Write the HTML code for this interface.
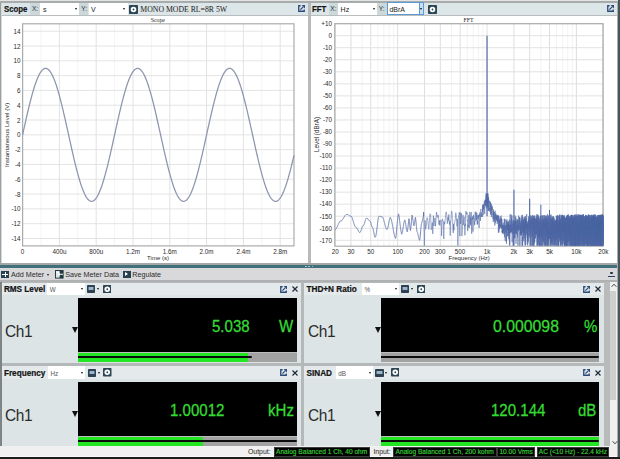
<!DOCTYPE html>
<html><head><meta charset="utf-8"><title>APx</title><style>
*{box-sizing:border-box;margin:0;padding:0}
html,body{width:620px;height:459px;overflow:hidden;background:#f0f0f0;font-family:"Liberation Sans",sans-serif;position:relative;color:#111}
.a{position:absolute}
.t{position:absolute;white-space:nowrap;line-height:1}
.hb{background:#dce5e7}
.lbl{background:#cdd8db}
.dd{background:#fff}
.arr{position:absolute;width:0;height:0;border-left:1.5px solid transparent;border-right:1.5px solid transparent;border-top:2px solid #111}
.gear{position:absolute;background:#2c4654;border-radius:1px}
.gear i{position:absolute;left:1.5px;top:1.5px;width:5.8px;height:5.8px;border:1.7px solid #fff;border-radius:50%;background:#2c4654}
.ic{position:absolute}
.mic{position:absolute;width:8.4px;height:8.3px;background:#2c4252;border-radius:0.8px}
.mic i{position:absolute;left:1px;top:2.2px;width:6.4px;height:3.6px;background:#9fb4c6;border-left:1.2px solid #5a7488;border-right:1.2px solid #5a7488}
.tri{position:absolute;width:0;height:0;border-left:1.5px solid transparent;border-right:1.5px solid transparent;border-top:2px solid #222}
svg text{font-family:"Liberation Sans",sans-serif}
.green{color:#2cd42c}
</style></head>
<body>
<div class="a" style="left:0px;top:0px;width:620px;height:1px;background:#e3e4e4;"></div>
<div class="a" style="left:0px;top:1px;width:620px;height:2px;background:#a7abab;"></div>
<div class="a" style="left:0px;top:3px;width:1px;height:260px;background:#9aa0a0;"></div>
<div class="a" style="left:1px;top:3px;width:1px;height:260px;background:#d6dada;"></div>
<div class="a" style="left:2px;top:3px;width:305.7px;height:12px;background:#dce5e7;"></div>
<div class="a" style="left:2px;top:15px;width:305.7px;height:1px;background:#b9bdbd;"></div>
<div class="a" style="left:2px;top:16px;width:305.7px;height:247px;background:#ffffff;"></div>
<div class="t" style="left:4px;top:5.1px;font-size:8.7px;font-weight:bold;color:#141414;-webkit-text-stroke:0.2px #141414;transform:scaleX(0.9);transform-origin:0 0">Scope</div>
<div class="a" style="left:30px;top:3px;width:10.3px;height:12px;background:#cdd8db;"></div>
<div class="t" style="left:32px;top:6px;font-size:6.5px;color:#26323e">X:</div>
<div class="a" style="left:40.3px;top:3px;width:38.5px;height:12px;background:#ffffff;"></div>
<div class="t" style="left:43px;top:6px;font-size:7px;color:#222">s</div>
<div class="arr" style="left:75px;top:8.2px"></div>
<div class="a" style="left:78.8px;top:3px;width:9.7px;height:12px;background:#cdd8db;"></div>
<div class="t" style="left:81.3px;top:6px;font-size:6.5px;color:#26323e">Y:</div>
<div class="a" style="left:88.5px;top:3px;width:39.1px;height:12px;background:#ffffff;"></div>
<div class="t" style="left:91px;top:6px;font-size:7px;color:#222">V</div>
<div class="arr" style="left:123.3px;top:8.2px"></div>
<svg class="ic" style="left:129.4px;top:4.6px" width="9" height="9" viewBox="0 0 9 9"><rect width="9" height="9" rx="0.8" fill="#2c4654"/><circle cx="4.5" cy="4.5" r="1.85" fill="none" stroke="#fff" stroke-width="1.9"/></svg>
<div class="t" style="left:140.3px;top:5.9px;font-size:7.75px;font-family:'Liberation Serif',serif;color:#1a1a1a">MONO MODE RL=8R 5W</div>
<svg class="ic" style="left:297.5px;top:5.2px" width="7" height="7" viewBox="0 0 7 7"><path d="M2.6 0.75 H0.75 V6.25 H6.25 V4.4" fill="none" stroke="#2a4878" stroke-width="1.3"/><path d="M2.4 4.6 L5.2 1.8" stroke="#2a4878" stroke-width="1.2"/><path d="M3.6 0 H7 V3.4 Z" fill="#2a4878"/></svg>
<div class="a" style="left:307.7px;top:3px;width:2.9px;height:260px;background:#b9bbbb;"></div>
<div class="a" style="left:310.6px;top:3px;width:306.9px;height:12px;background:#dce5e7;"></div>
<div class="a" style="left:310.6px;top:15px;width:306.9px;height:1px;background:#b9bdbd;"></div>
<div class="a" style="left:310.6px;top:16px;width:306.9px;height:247px;background:#ffffff;"></div>
<div class="a" style="left:617.2px;top:3px;width:1px;height:260px;background:#a8acac;"></div>
<div class="a" style="left:618.2px;top:0px;width:1.8px;height:263px;background:#46565c;"></div>
<div class="t" style="left:312.4px;top:5.1px;font-size:8.7px;font-weight:bold;color:#141414;-webkit-text-stroke:0.2px #141414;transform:scaleX(0.9);transform-origin:0 0">FFT</div>
<div class="a" style="left:329px;top:3px;width:9px;height:12px;background:#cdd8db;"></div>
<div class="t" style="left:330.3px;top:6px;font-size:6.5px;color:#26323e">X:</div>
<div class="a" style="left:338px;top:3px;width:39px;height:12px;background:#ffffff;"></div>
<div class="t" style="left:340.6px;top:6px;font-size:7px;color:#222">Hz</div>
<div class="arr" style="left:372.5px;top:8.2px"></div>
<div class="a" style="left:377px;top:3px;width:9.8px;height:12px;background:#cdd8db;"></div>
<div class="t" style="left:378.8px;top:6px;font-size:6.5px;color:#26323e">Y:</div>
<div class="a" style="left:386.8px;top:2.2px;width:37.4px;height:13.2px;background:#ffffff;border:1px solid #5a9ad6"></div>
<div class="a" style="left:419.4px;top:2.2px;width:4.8px;height:13.2px;background:#c9dff2;border:1px solid #5a9ad6"></div>
<div class="t" style="left:389.4px;top:6px;font-size:7px;color:#222">dBrA</div>
<div class="arr" style="left:420.3px;top:8.2px"></div>
<svg class="ic" style="left:427.6px;top:4.6px" width="9" height="9" viewBox="0 0 9 9"><rect width="9" height="9" rx="0.8" fill="#2c4654"/><circle cx="4.5" cy="4.5" r="1.85" fill="none" stroke="#fff" stroke-width="1.9"/></svg>
<svg class="ic" style="left:606.8px;top:5.4px" width="7" height="7" viewBox="0 0 7 7"><path d="M2.6 0.75 H0.75 V6.25 H6.25 V4.4" fill="none" stroke="#2a4878" stroke-width="1.3"/><path d="M2.4 4.6 L5.2 1.8" stroke="#2a4878" stroke-width="1.2"/><path d="M3.6 0 H7 V3.4 Z" fill="#2a4878"/></svg>
<svg class="a" style="left:0;top:0" width="620" height="263" viewBox="0 0 620 263"><g><line x1="22.6" y1="23.8" x2="22.6" y2="245.9" stroke="#e2e2e2" stroke-width="1"/>
<line x1="41" y1="23.8" x2="41" y2="245.9" stroke="#f4f4f4" stroke-width="1"/>
<line x1="59.4" y1="23.8" x2="59.4" y2="245.9" stroke="#e2e2e2" stroke-width="1"/>
<line x1="77.8" y1="23.8" x2="77.8" y2="245.9" stroke="#f4f4f4" stroke-width="1"/>
<line x1="96.2" y1="23.8" x2="96.2" y2="245.9" stroke="#e2e2e2" stroke-width="1"/>
<line x1="114.6" y1="23.8" x2="114.6" y2="245.9" stroke="#f4f4f4" stroke-width="1"/>
<line x1="133" y1="23.8" x2="133" y2="245.9" stroke="#e2e2e2" stroke-width="1"/>
<line x1="151.4" y1="23.8" x2="151.4" y2="245.9" stroke="#f4f4f4" stroke-width="1"/>
<line x1="169.8" y1="23.8" x2="169.8" y2="245.9" stroke="#e2e2e2" stroke-width="1"/>
<line x1="188.2" y1="23.8" x2="188.2" y2="245.9" stroke="#f4f4f4" stroke-width="1"/>
<line x1="206.6" y1="23.8" x2="206.6" y2="245.9" stroke="#e2e2e2" stroke-width="1"/>
<line x1="225" y1="23.8" x2="225" y2="245.9" stroke="#f4f4f4" stroke-width="1"/>
<line x1="243.4" y1="23.8" x2="243.4" y2="245.9" stroke="#e2e2e2" stroke-width="1"/>
<line x1="261.8" y1="23.8" x2="261.8" y2="245.9" stroke="#f4f4f4" stroke-width="1"/>
<line x1="280.2" y1="23.8" x2="280.2" y2="245.9" stroke="#e2e2e2" stroke-width="1"/>
<line x1="22.6" y1="238.49" x2="294.0" y2="238.49" stroke="#e4e4e4" stroke-width="1"/>
<line x1="22.6" y1="223.69" x2="294.0" y2="223.69" stroke="#e4e4e4" stroke-width="1"/>
<line x1="22.6" y1="208.88" x2="294.0" y2="208.88" stroke="#e4e4e4" stroke-width="1"/>
<line x1="22.6" y1="194.07" x2="294.0" y2="194.07" stroke="#e4e4e4" stroke-width="1"/>
<line x1="22.6" y1="179.27" x2="294.0" y2="179.27" stroke="#e4e4e4" stroke-width="1"/>
<line x1="22.6" y1="164.46" x2="294.0" y2="164.46" stroke="#e4e4e4" stroke-width="1"/>
<line x1="22.6" y1="149.66" x2="294.0" y2="149.66" stroke="#e4e4e4" stroke-width="1"/>
<line x1="22.6" y1="134.85" x2="294.0" y2="134.85" stroke="#e4e4e4" stroke-width="1"/>
<line x1="22.6" y1="120.04" x2="294.0" y2="120.04" stroke="#e4e4e4" stroke-width="1"/>
<line x1="22.6" y1="105.24" x2="294.0" y2="105.24" stroke="#e4e4e4" stroke-width="1"/>
<line x1="22.6" y1="90.43" x2="294.0" y2="90.43" stroke="#e4e4e4" stroke-width="1"/>
<line x1="22.6" y1="75.63" x2="294.0" y2="75.63" stroke="#e4e4e4" stroke-width="1"/>
<line x1="22.6" y1="60.82" x2="294.0" y2="60.82" stroke="#e4e4e4" stroke-width="1"/>
<line x1="22.6" y1="46.01" x2="294.0" y2="46.01" stroke="#e4e4e4" stroke-width="1"/>
<line x1="22.6" y1="31.21" x2="294.0" y2="31.21" stroke="#e4e4e4" stroke-width="1"/>
<rect x="22.6" y="23.8" width="271.4" height="222.1" fill="none" stroke="#acacac" stroke-width="1.2"/>
<polyline points="22.6,134.85 23.05,132.8 23.5,130.74 23.96,128.7 24.41,126.66 24.86,124.62 25.31,122.6 25.77,120.58 26.22,118.59 26.67,116.6 27.12,114.64 27.58,112.69 28.03,110.76 28.48,108.86 28.93,106.98 29.38,105.13 29.84,103.31 30.29,101.52 30.74,99.76 31.19,98.03 31.65,96.34 32.1,94.68 32.55,93.06 33,91.49 33.46,89.95 33.91,88.46 34.36,87.01 34.81,85.61 35.27,84.25 35.72,82.94 36.17,81.68 36.62,80.48 37.07,79.32 37.53,78.22 37.98,77.17 38.43,76.18 38.88,75.24 39.34,74.36 39.79,73.53 40.24,72.77 40.69,72.07 41.15,71.42 41.6,70.84 42.05,70.31 42.5,69.85 42.95,69.45 43.41,69.11 43.86,68.84 44.31,68.63 44.76,68.48 45.22,68.39 45.67,68.37 46.12,68.41 46.57,68.52 47.03,68.69 47.48,68.92 47.93,69.21 48.38,69.57 48.84,69.99 49.29,70.47 49.74,71.01 50.19,71.62 50.64,72.28 51.1,73.01 51.55,73.79 52,74.63 52.45,75.53 52.91,76.48 53.36,77.5 53.81,78.56 54.26,79.68 54.72,80.85 55.17,82.08 55.62,83.35 56.07,84.67 56.53,86.05 56.98,87.46 57.43,88.93 57.88,90.43 58.33,91.98 58.79,93.57 59.24,95.2 59.69,96.87 60.14,98.57 60.6,100.31 61.05,102.08 61.5,103.88 61.95,105.72 62.41,107.58 62.86,109.46 63.31,111.37 63.76,113.3 64.21,115.26 64.67,117.23 65.12,119.22 65.57,121.22 66.02,123.24 66.48,125.27 66.93,127.3 67.38,129.35 67.83,131.4 68.29,133.45 68.74,135.5 69.19,137.55 69.64,139.61 70.09,141.65 70.55,143.69 71,145.72 71.45,147.74 71.9,149.75 72.36,151.75 72.81,153.72 73.26,155.68 73.71,157.62 74.17,159.54 74.62,161.44 75.07,163.31 75.52,165.15 75.98,166.96 76.43,168.75 76.88,170.5 77.33,172.21 77.78,173.89 78.24,175.54 78.69,177.14 79.14,178.71 79.59,180.23 80.05,181.71 80.5,183.14 80.95,184.53 81.4,185.87 81.86,187.16 82.31,188.41 82.76,189.6 83.21,190.74 83.66,191.82 84.12,192.85 84.57,193.83 85.02,194.75 85.47,195.61 85.93,196.41 86.38,197.16 86.83,197.85 87.28,198.47 87.74,199.04 88.19,199.54 88.64,199.98 89.09,200.36 89.55,200.68 90,200.94 90.45,201.13 90.9,201.26 91.35,201.32 91.81,201.32 92.26,201.26 92.71,201.13 93.16,200.95 93.62,200.69 94.07,200.38 94.52,200 94.97,199.56 95.43,199.06 95.88,198.5 96.33,197.88 96.78,197.19 97.23,196.45 97.69,195.65 98.14,194.79 98.59,193.87 99.04,192.9 99.5,191.87 99.95,190.79 100.4,189.65 100.85,188.46 101.31,187.22 101.76,185.93 102.21,184.6 102.66,183.21 103.12,181.78 103.57,180.3 104.02,178.78 104.47,177.22 104.92,175.61 105.38,173.97 105.83,172.29 106.28,170.58 106.73,168.83 107.19,167.05 107.64,165.24 108.09,163.4 108.54,161.53 109,159.63 109.45,157.72 109.9,155.78 110.35,153.82 110.8,151.84 111.26,149.85 111.71,147.84 112.16,145.82 112.61,143.79 113.07,141.75 113.52,139.7 113.97,137.65 114.42,135.6 114.88,133.55 115.33,131.49 115.78,129.44 116.23,127.4 116.69,125.36 117.14,123.34 117.59,121.32 118.04,119.31 118.49,117.32 118.95,115.35 119.4,113.4 119.85,111.46 120.3,109.55 120.76,107.67 121.21,105.81 121.66,103.97 122.11,102.17 122.57,100.4 123.02,98.66 123.47,96.95 123.92,95.28 124.37,93.65 124.83,92.06 125.28,90.51 125.73,89 126.18,87.53 126.64,86.11 127.09,84.74 127.54,83.41 127.99,82.14 128.45,80.91 128.9,79.74 129.35,78.61 129.8,77.55 130.26,76.53 130.71,75.57 131.16,74.67 131.61,73.83 132.06,73.04 132.52,72.32 132.97,71.65 133.42,71.04 133.87,70.5 134.33,70.01 134.78,69.59 135.23,69.23 135.68,68.93 136.14,68.7 136.59,68.53 137.04,68.42 137.49,68.37 137.94,68.39 138.4,68.47 138.85,68.62 139.3,68.83 139.75,69.1 140.21,69.43 140.66,69.83 141.11,70.29 141.56,70.81 142.02,71.39 142.47,72.03 142.92,72.74 143.37,73.5 143.83,74.32 144.28,75.19 144.73,76.13 145.18,77.12 145.63,78.17 146.09,79.27 146.54,80.42 146.99,81.62 147.44,82.88 147.9,84.19 148.35,85.54 148.8,86.94 149.25,88.39 149.71,89.88 150.16,91.41 150.61,92.99 151.06,94.6 151.52,96.26 151.97,97.95 152.42,99.67 152.87,101.43 153.32,103.22 153.78,105.04 154.23,106.89 154.68,108.77 155.13,110.67 155.59,112.6 156.04,114.54 156.49,116.51 156.94,118.49 157.4,120.49 157.85,122.5 158.3,124.52 158.75,126.56 159.2,128.6 159.66,130.65 160.11,132.7 160.56,134.75 161.01,136.8 161.47,138.86 161.92,140.9 162.37,142.95 162.82,144.98 163.28,147.01 163.73,149.02 164.18,151.02 164.63,153 165.09,154.97 165.54,156.92 165.99,158.84 166.44,160.75 166.89,162.63 167.35,164.48 167.8,166.3 168.25,168.1 168.7,169.86 169.16,171.59 169.61,173.28 170.06,174.94 170.51,176.56 170.97,178.14 171.42,179.68 171.87,181.17 172.32,182.62 172.77,184.03 173.23,185.39 173.68,186.7 174.13,187.96 174.58,189.17 175.04,190.33 175.49,191.43 175.94,192.48 176.39,193.48 176.85,194.42 177.3,195.3 177.75,196.13 178.2,196.89 178.65,197.6 179.11,198.25 179.56,198.84 180.01,199.36 180.46,199.83 180.92,200.23 181.37,200.57 181.82,200.85 182.27,201.06 182.73,201.22 183.18,201.3 183.63,201.33 184.08,201.29 184.54,201.19 184.99,201.02 185.44,200.79 185.89,200.5 186.34,200.15 186.8,199.73 187.25,199.25 187.7,198.71 188.15,198.11 188.61,197.45 189.06,196.73 189.51,195.95 189.96,195.11 190.42,194.21 190.87,193.26 191.32,192.25 191.77,191.19 192.22,190.07 192.68,188.9 193.13,187.68 193.58,186.41 194.03,185.09 194.49,183.72 194.94,182.31 195.39,180.85 195.84,179.34 196.3,177.79 196.75,176.21 197.2,174.58 197.65,172.91 198.11,171.21 198.56,169.47 199.01,167.7 199.46,165.9 199.91,164.07 200.37,162.21 200.82,160.33 201.27,158.42 201.72,156.49 202.18,154.54 202.63,152.57 203.08,150.58 203.53,148.58 203.99,146.56 204.44,144.53 204.89,142.5 205.34,140.45 205.79,138.4 206.25,136.35 206.7,134.3 207.15,132.24 207.6,130.19 208.06,128.15 208.51,126.11 208.96,124.08 209.41,122.05 209.87,120.04 210.32,118.05 210.77,116.07 211.22,114.11 211.68,112.17 212.13,110.25 212.58,108.35 213.03,106.48 213.48,104.64 213.94,102.82 214.39,101.04 214.84,99.29 215.29,97.57 215.75,95.89 216.2,94.24 216.65,92.63 217.1,91.07 217.56,89.54 218.01,88.06 218.46,86.63 218.91,85.24 219.36,83.89 219.82,82.6 220.27,81.35 220.72,80.16 221.17,79.02 221.63,77.93 222.08,76.9 222.53,75.92 222.98,75 223.44,74.13 223.89,73.32 224.34,72.58 224.79,71.89 225.25,71.26 225.7,70.69 226.15,70.18 226.6,69.74 227.05,69.35 227.51,69.03 227.96,68.78 228.41,68.58 228.86,68.45 229.32,68.38 229.77,68.38 230.22,68.44 230.67,68.56 231.13,68.74 231.58,68.99 232.03,69.3 232.48,69.68 232.93,70.11 233.39,70.61 233.84,71.17 234.29,71.79 234.74,72.47 235.2,73.21 235.65,74.01 236.1,74.87 236.55,75.78 237.01,76.75 237.46,77.78 237.91,78.86 238.36,79.99 238.82,81.18 239.27,82.42 239.72,83.7 240.17,85.04 240.62,86.42 241.08,87.85 241.53,89.33 241.98,90.85 242.43,92.41 242.89,94.01 243.34,95.65 243.79,97.32 244.24,99.04 244.7,100.78 245.15,102.56 245.6,104.37 246.05,106.21 246.5,108.08 246.96,109.97 247.41,111.89 247.86,113.83 248.31,115.79 248.77,117.76 249.22,119.76 249.67,121.76 250.12,123.78 250.58,125.81 251.03,127.85 251.48,129.9 251.93,131.95 252.39,134 252.84,136.05 253.29,138.11 253.74,140.16 254.19,142.2 254.65,144.24 255.1,146.27 255.55,148.28 256,150.29 256.46,152.28 256.91,154.25 257.36,156.21 257.81,158.14 258.27,160.06 258.72,161.94 259.17,163.81 259.62,165.64 260.07,167.45 260.53,169.22 260.98,170.96 261.43,172.67 261.88,174.34 262.34,175.97 262.79,177.57 263.24,179.12 263.69,180.63 264.15,182.1 264.6,183.52 265.05,184.9 265.5,186.22 265.96,187.5 266.41,188.73 266.86,189.91 267.31,191.03 267.76,192.1 268.22,193.12 268.67,194.08 269.12,194.99 269.57,195.83 270.03,196.62 270.48,197.35 270.93,198.02 271.38,198.63 271.84,199.18 272.29,199.67 272.74,200.09 273.19,200.45 273.64,200.76 274.1,200.99 274.55,201.17 275,201.28 275.45,201.33 275.91,201.31 276.36,201.23 276.81,201.09 277.26,200.88 277.72,200.62 278.17,200.28 278.62,199.89 279.07,199.43 279.53,198.92 279.98,198.34 280.43,197.7 280.88,197 281.33,196.24 281.79,195.42 282.24,194.55 282.69,193.62 283.14,192.63 283.6,191.59 284.05,190.49 284.5,189.34 284.95,188.14 285.41,186.88 285.86,185.58 286.31,184.23 286.76,182.83 287.22,181.38 287.67,179.9 288.12,178.36 288.57,176.79 289.02,175.18 289.48,173.53 289.93,171.84 290.38,170.11 290.83,168.35 291.29,166.56 291.74,164.74 292.19,162.9 292.64,161.02 293.1,159.12 293.55,157.2 294,155.25" fill="none" stroke="#8c94ae" stroke-width="1.25"/></g><g><line x1="335.2" y1="23.7" x2="335.2" y2="246.2" stroke="#dedede" stroke-width="1"/>
<line x1="350.94" y1="23.7" x2="350.94" y2="246.2" stroke="#dedede" stroke-width="1"/>
<line x1="362.1" y1="23.7" x2="362.1" y2="246.2" stroke="#f3f3f3" stroke-width="1"/>
<line x1="370.76" y1="23.7" x2="370.76" y2="246.2" stroke="#dedede" stroke-width="1"/>
<line x1="377.84" y1="23.7" x2="377.84" y2="246.2" stroke="#f3f3f3" stroke-width="1"/>
<line x1="383.82" y1="23.7" x2="383.82" y2="246.2" stroke="#f3f3f3" stroke-width="1"/>
<line x1="389" y1="23.7" x2="389" y2="246.2" stroke="#f3f3f3" stroke-width="1"/>
<line x1="393.58" y1="23.7" x2="393.58" y2="246.2" stroke="#f3f3f3" stroke-width="1"/>
<line x1="397.66" y1="23.7" x2="397.66" y2="246.2" stroke="#dedede" stroke-width="1"/>
<line x1="424.57" y1="23.7" x2="424.57" y2="246.2" stroke="#dedede" stroke-width="1"/>
<line x1="440.3" y1="23.7" x2="440.3" y2="246.2" stroke="#dedede" stroke-width="1"/>
<line x1="451.47" y1="23.7" x2="451.47" y2="246.2" stroke="#f3f3f3" stroke-width="1"/>
<line x1="460.13" y1="23.7" x2="460.13" y2="246.2" stroke="#dedede" stroke-width="1"/>
<line x1="467.21" y1="23.7" x2="467.21" y2="246.2" stroke="#f3f3f3" stroke-width="1"/>
<line x1="473.19" y1="23.7" x2="473.19" y2="246.2" stroke="#f3f3f3" stroke-width="1"/>
<line x1="478.37" y1="23.7" x2="478.37" y2="246.2" stroke="#f3f3f3" stroke-width="1"/>
<line x1="482.94" y1="23.7" x2="482.94" y2="246.2" stroke="#f3f3f3" stroke-width="1"/>
<line x1="487.03" y1="23.7" x2="487.03" y2="246.2" stroke="#dedede" stroke-width="1"/>
<line x1="513.93" y1="23.7" x2="513.93" y2="246.2" stroke="#dedede" stroke-width="1"/>
<line x1="529.67" y1="23.7" x2="529.67" y2="246.2" stroke="#dedede" stroke-width="1"/>
<line x1="540.84" y1="23.7" x2="540.84" y2="246.2" stroke="#f3f3f3" stroke-width="1"/>
<line x1="549.5" y1="23.7" x2="549.5" y2="246.2" stroke="#dedede" stroke-width="1"/>
<line x1="556.57" y1="23.7" x2="556.57" y2="246.2" stroke="#f3f3f3" stroke-width="1"/>
<line x1="562.55" y1="23.7" x2="562.55" y2="246.2" stroke="#f3f3f3" stroke-width="1"/>
<line x1="567.74" y1="23.7" x2="567.74" y2="246.2" stroke="#f3f3f3" stroke-width="1"/>
<line x1="572.31" y1="23.7" x2="572.31" y2="246.2" stroke="#f3f3f3" stroke-width="1"/>
<line x1="576.4" y1="23.7" x2="576.4" y2="246.2" stroke="#dedede" stroke-width="1"/>
<line x1="603.3" y1="23.7" x2="603.3" y2="246.2" stroke="#dedede" stroke-width="1"/>
<line x1="603.3" y1="23.7" x2="603.3" y2="246.2" stroke="#dedede" stroke-width="1"/>
<line x1="334.8" y1="23.67" x2="603.0" y2="23.67" stroke="#e2e2e2" stroke-width="1"/>
<line x1="334.8" y1="35.7" x2="603.0" y2="35.7" stroke="#e2e2e2" stroke-width="1"/>
<line x1="334.8" y1="47.73" x2="603.0" y2="47.73" stroke="#e2e2e2" stroke-width="1"/>
<line x1="334.8" y1="59.77" x2="603.0" y2="59.77" stroke="#e2e2e2" stroke-width="1"/>
<line x1="334.8" y1="71.81" x2="603.0" y2="71.81" stroke="#e2e2e2" stroke-width="1"/>
<line x1="334.8" y1="83.84" x2="603.0" y2="83.84" stroke="#e2e2e2" stroke-width="1"/>
<line x1="334.8" y1="95.88" x2="603.0" y2="95.88" stroke="#e2e2e2" stroke-width="1"/>
<line x1="334.8" y1="107.91" x2="603.0" y2="107.91" stroke="#e2e2e2" stroke-width="1"/>
<line x1="334.8" y1="119.95" x2="603.0" y2="119.95" stroke="#e2e2e2" stroke-width="1"/>
<line x1="334.8" y1="131.98" x2="603.0" y2="131.98" stroke="#e2e2e2" stroke-width="1"/>
<line x1="334.8" y1="144.01" x2="603.0" y2="144.01" stroke="#e2e2e2" stroke-width="1"/>
<line x1="334.8" y1="156.05" x2="603.0" y2="156.05" stroke="#e2e2e2" stroke-width="1"/>
<line x1="334.8" y1="168.08" x2="603.0" y2="168.08" stroke="#e2e2e2" stroke-width="1"/>
<line x1="334.8" y1="180.12" x2="603.0" y2="180.12" stroke="#e2e2e2" stroke-width="1"/>
<line x1="334.8" y1="192.16" x2="603.0" y2="192.16" stroke="#e2e2e2" stroke-width="1"/>
<line x1="334.8" y1="204.19" x2="603.0" y2="204.19" stroke="#e2e2e2" stroke-width="1"/>
<line x1="334.8" y1="216.23" x2="603.0" y2="216.23" stroke="#e2e2e2" stroke-width="1"/>
<line x1="334.8" y1="228.26" x2="603.0" y2="228.26" stroke="#e2e2e2" stroke-width="1"/>
<line x1="334.8" y1="240.3" x2="603.0" y2="240.3" stroke="#e2e2e2" stroke-width="1"/>
<rect x="334.8" y="23.7" width="268.2" height="222.5" fill="none" stroke="#acacac" stroke-width="1.2"/>
<polyline points="335.2,229.5 335.3,229.5 335.4,229.4 335.5,229.4 335.6,229.4 335.7,229.3 335.8,229.2 335.9,229.1 336.0,229.0 336.1,228.9 336.2,228.8 336.3,228.7 336.4,228.5 336.5,228.4 336.6,228.2 336.7,228.1 336.8,227.9 336.8,227.7 336.9,227.5 337.0,227.3 337.1,227.1 337.2,226.9 337.3,226.6 337.4,226.4 337.5,226.2 337.6,226.0 337.7,225.7 337.8,225.5 337.9,225.2 338.0,225.0 338.1,224.8 338.2,224.5 338.3,224.3 338.4,224.1 338.5,223.9 338.6,223.6 338.7,223.4 338.8,223.2 338.9,223.0 339.0,222.8 339.1,222.6 339.2,222.4 339.3,222.3 339.4,222.1 339.5,222.0 339.6,221.8 339.7,221.7 339.8,221.6 339.9,221.5 339.9,221.4 340.0,221.3 340.1,221.2 340.2,221.1 340.3,221.1 340.4,221.1 340.5,221.0 340.6,221.0 340.7,221.0 340.8,221.0 340.9,221.0 341.0,221.0 341.1,220.9 341.2,220.9 341.3,220.8 341.4,220.8 341.5,220.7 341.6,220.6 341.7,220.6 341.8,220.5 341.9,220.4 342.0,220.3 342.1,220.2 342.2,220.1 342.3,220.0 342.4,219.8 342.5,219.7 342.6,219.6 342.7,219.4 342.8,219.3 342.9,219.2 343.0,219.0 343.0,218.9 343.1,218.7 343.2,218.5 343.3,218.4 343.4,218.2 343.5,218.1 343.6,217.9 343.7,217.7 343.8,217.6 343.9,217.4 344.0,217.3 344.1,217.1 344.2,216.9 344.3,216.8 344.4,216.6 344.5,216.5 344.6,216.3 344.7,216.2 344.8,216.0 344.9,215.9 345.0,215.8 345.1,215.6 345.2,215.5 345.3,215.4 345.4,215.3 345.5,215.2 345.6,215.1 345.7,215.0 345.8,214.9 345.9,214.8 346.0,214.7 346.1,214.7 346.2,214.6 346.2,214.6 346.3,214.5 346.4,214.5 346.5,214.5 346.6,214.4 346.7,214.4 346.8,214.4 346.9,214.4 347.0,214.4 347.1,214.4 347.2,214.5 347.3,214.5 347.4,214.5 347.5,214.5 347.6,214.6 347.7,214.6 347.8,214.6 347.9,214.7 348.0,214.7 348.1,214.8 348.2,214.9 348.3,214.9 348.4,215.0 348.5,215.0 348.6,215.1 348.7,215.2 348.8,215.2 348.9,215.3 349.0,215.4 349.1,215.4 349.2,215.5 349.3,215.6 349.3,215.6 349.4,215.7 349.5,215.8 349.6,215.8 349.7,215.9 349.8,215.9 349.9,216.0 350.0,216.0 350.1,216.1 350.2,216.1 350.3,216.1 350.4,216.2 350.5,216.2 350.6,216.2 350.7,216.2 350.8,216.2 350.9,216.2 351.0,216.2 351.1,216.3 351.2,216.3 351.3,216.4 351.4,216.4 351.5,216.6 351.6,216.7 351.7,216.8 351.8,217.0 351.9,217.2 352.0,217.4 352.1,217.6 352.2,217.8 352.3,218.1 352.4,218.3 352.4,218.6 352.5,218.9 352.6,219.2 352.7,219.5 352.8,219.8 352.9,220.1 353.0,220.5 353.1,220.8 353.2,221.1 353.3,221.5 353.4,221.8 353.5,222.2 353.6,222.5 353.7,222.8 353.8,223.2 353.9,223.5 354.0,223.8 354.1,224.1 354.2,224.4 354.3,224.7 354.4,225.0 354.5,225.2 354.6,225.5 354.7,225.7 354.8,225.9 354.9,226.1 355.0,226.3 355.1,226.5 355.2,226.6 355.3,226.7 355.4,226.8 355.5,226.9 355.6,227.0 355.6,227.0 355.7,227.1 355.8,227.1 355.9,227.1 356.0,227.1 356.1,227.2 356.2,227.2 356.3,227.3 356.4,227.4 356.5,227.5 356.6,227.6 356.7,227.7 356.8,227.9 356.9,228.0 357.0,228.2 357.1,228.4 357.2,228.5 357.3,228.7 357.4,228.9 357.5,229.1 357.6,229.3 357.7,229.5 357.8,229.7 357.9,229.9 358.0,230.1 358.1,230.3 358.2,230.5 358.3,230.7 358.4,230.9 358.5,231.1 358.6,231.3 358.7,231.4 358.7,231.6 358.8,231.7 358.9,231.9 359.0,232.0 359.1,232.1 359.2,232.2 359.3,232.3 359.4,232.4 359.5,232.4 359.6,232.4 359.7,232.5 359.8,232.5 359.9,232.5 360.0,232.4 360.1,232.3 360.2,232.2 360.3,232.1 360.4,231.9 360.5,231.8 360.6,231.6 360.7,231.3 360.8,231.1 360.9,230.8 361.0,230.6 361.1,230.3 361.2,230.0 361.3,229.7 361.4,229.4 361.5,229.1 361.6,228.8 361.7,228.5 361.8,228.2 361.8,227.9 361.9,227.6 362.0,227.3 362.1,227.1 362.2,226.8 362.3,226.6 362.4,226.4 362.5,226.3 362.6,226.1 362.7,226.0 362.8,225.9 362.9,225.9 363.0,225.9 363.1,225.8 363.2,225.8 363.3,225.8 363.4,225.7 363.5,225.6 363.6,225.4 363.7,225.3 363.8,225.1 363.9,224.9 364.0,224.7 364.1,224.4 364.2,224.2 364.3,223.9 364.4,223.6 364.5,223.3 364.6,223.0 364.7,222.6 364.8,222.3 364.9,222.0 365.0,221.7 365.0,221.3 365.1,221.0 365.2,220.7 365.3,220.4 365.4,220.1 365.5,219.8 365.6,219.5 365.7,219.3 365.8,219.1 365.9,218.8 366.0,218.7 366.1,218.5 366.2,218.3 366.3,218.2 366.4,218.1 366.5,218.1 366.6,218.0 366.7,218.0 366.8,218.0 366.9,218.1 367.0,218.1 367.1,218.1 367.2,218.2 367.3,218.3 367.4,218.4 367.5,218.4 367.6,218.5 367.7,218.6 367.8,218.8 367.9,218.9 368.0,219.0 368.1,219.1 368.1,219.3 368.2,219.4 368.3,219.6 368.4,219.7 368.5,219.8 368.6,220.0 368.7,220.1 368.8,220.2 368.9,220.3 369.0,220.5 369.1,220.6 369.2,220.7 369.3,220.7 369.4,220.8 369.5,220.9 369.6,220.9 369.7,221.0 369.8,221.0 369.9,221.0 370.0,221.0 370.1,221.1 370.2,221.2 370.3,221.3 370.4,221.5 370.5,221.7 370.6,222.0 370.7,222.3 370.8,222.6 370.9,223.0 371.0,223.3 371.1,223.7 371.2,224.1 371.2,224.5 371.3,224.9 371.4,225.3 371.5,225.6 371.6,226.0 371.7,226.2 371.8,226.5 371.9,226.7 372.0,226.9 372.1,227.0 372.2,227.0 372.3,227.1 372.4,227.1 372.5,227.2 372.6,227.4 372.7,227.6 372.8,227.8 372.9,228.2 373.0,228.5 373.1,228.9 373.2,229.3 373.3,229.8 373.4,230.3 373.5,230.8 373.6,231.4 373.7,231.9 373.8,232.4 373.9,233.0 374.0,233.5 374.1,234.0 374.2,234.5 374.3,235.0 374.4,235.4 374.4,235.8 374.5,236.2 374.6,236.5 374.7,236.8 374.8,237.0 374.9,237.1 375.0,237.2 375.1,237.3 375.2,237.3 375.3,237.2 375.4,237.1 375.5,236.9 375.6,236.6 375.7,236.3 375.8,235.9 375.9,235.5 376.0,235.0 376.1,234.5 376.2,233.9 376.3,233.3 376.4,232.7 376.5,232.0 376.6,231.3 376.7,230.5 376.8,229.8 376.9,229.0 377.0,228.2 377.1,227.4 377.2,226.5 377.3,225.7 377.4,224.9 377.5,224.1 377.5,223.4 377.6,222.6 377.7,221.9 377.8,221.2 377.9,220.5 378.0,219.9 378.1,219.3 378.2,218.7 378.3,218.2 378.4,217.8 378.5,217.4 378.6,217.0 378.7,216.8 378.8,216.5 378.9,216.4 379.0,216.3 379.1,216.2 379.2,216.2 379.3,216.2 379.4,216.2 379.5,216.2 379.6,216.3 379.7,216.3 379.8,216.3 379.9,216.3 380.0,216.3 380.1,216.4 380.2,216.4 380.3,216.4 380.4,216.4 380.5,216.5 380.6,216.5 380.6,216.5 380.7,216.6 380.8,216.6 380.9,216.6 381.0,216.7 381.1,216.7 381.2,216.7 381.3,216.7 381.4,216.8 381.5,216.8 381.6,216.8 381.7,216.8 381.8,216.8 381.9,216.8 382.0,216.8 382.1,216.8 382.2,216.8 382.3,216.9 382.4,216.9 382.5,217.0 382.6,217.1 382.7,217.2 382.8,217.4 382.9,217.6 383.0,217.8 383.1,218.0 383.2,218.2 383.3,218.5 383.4,218.7 383.5,219.0 383.6,219.3 383.7,219.6 383.8,220.0 383.8,220.3 383.9,220.7 384.0,221.1 384.1,221.4 384.2,221.8 384.3,222.2 384.4,222.6 384.5,223.0 384.6,223.4 384.7,223.8 384.8,224.2 384.9,224.5 385.0,224.9 385.1,225.3 385.2,225.7 385.3,226.0 385.4,226.4 385.5,226.7 385.6,227.0 385.7,227.3 385.8,227.6 385.9,227.9 386.0,228.1 386.1,228.4 386.2,228.6 386.3,228.8 386.4,228.9 386.5,229.1 386.6,229.2 386.7,229.3 386.8,229.4 386.9,229.4 386.9,229.5 387.0,229.5 387.1,229.4 387.2,229.3 387.3,229.2 387.4,229.0 387.5,228.8 387.6,228.5 387.7,228.2 387.8,227.9 387.9,227.5 388.0,227.1 388.1,226.7 388.2,226.2 388.3,225.7 388.4,225.2 388.5,224.7 388.6,224.1 388.7,223.6 388.8,223.1 388.9,222.5 389.0,222.0 389.1,221.5 389.2,221.0 389.3,220.5 389.4,220.1 389.5,219.6 389.6,219.2 389.7,218.9 389.8,218.5 389.9,218.3 390.0,218.0 390.0,217.8 390.1,217.6 390.2,217.5 390.3,217.5 390.4,217.4 390.5,217.6 390.6,217.8 390.7,218.0 390.8,218.3 390.9,218.5 391.0,218.8 391.1,219.1 391.2,219.4 391.3,219.8 391.4,220.1 391.5,220.5 391.6,220.9 391.7,221.3 391.8,221.7 391.9,222.2 392.0,222.7 392.1,223.1 392.2,223.6 392.3,224.1 392.4,224.6 392.5,225.1 392.6,225.6 392.7,226.2 392.8,226.7 392.9,227.2 393.0,227.8 393.1,228.3 393.2,228.8 393.2,229.4 393.3,229.9 393.4,230.4 393.5,230.9 393.6,231.4 393.7,232.0 393.8,232.4 393.9,232.9 394.0,233.4 394.1,233.8 394.2,234.3 394.3,234.7 394.4,235.1 394.5,235.5 394.6,235.9 394.7,236.3 394.8,236.6 394.9,236.9 395.0,237.2 395.1,237.5 395.2,237.7 395.3,238.0 395.4,238.2 395.5,238.4 395.6,238.4 395.7,238.0 395.8,237.5 395.9,237.0 396.0,236.4 396.1,235.7 396.2,234.9 396.3,234.0 396.3,233.1 396.4,232.2 396.5,231.2 396.6,230.1 396.7,229.1 396.8,228.0 396.9,226.9 397.0,225.8 397.1,224.6 397.2,223.5 397.3,222.5 397.4,221.4 397.5,220.4 397.6,219.4 397.7,218.5 397.8,217.7 397.9,216.9 398.0,216.1 398.1,215.5 398.2,214.9 398.3,214.4 398.4,214.0 398.5,213.9 398.6,214.2 398.7,214.6 398.8,215.0 398.9,215.4 399.0,215.9 399.1,216.5 399.2,217.1 399.3,217.7 399.4,218.3 399.4,219.0 399.5,219.8 399.6,220.5 399.7,221.3 399.8,222.1 399.9,222.9 400.0,223.7 400.1,224.5 400.2,225.3 400.3,226.1 400.4,226.9 400.5,227.7 400.6,228.4 400.7,229.1 400.8,229.8 400.9,230.5 401.0,231.1 401.1,231.7 401.2,232.2 401.3,232.7 401.4,233.2 401.5,233.6 401.6,233.9 401.7,234.2 401.8,234.2 401.9,233.9 402.0,233.6 402.1,233.3 402.2,233.0 402.3,232.6 402.4,232.1 402.5,231.7 402.6,231.2 402.6,230.6 402.7,230.1 402.8,229.5 402.9,228.9 403.0,228.3 403.1,227.7 403.2,227.0 403.3,226.4 403.4,225.8 403.5,225.2 403.6,224.6 403.7,224.0 403.8,223.5 403.9,222.9 404.0,222.4 404.1,222.0 404.2,221.5 404.3,221.1 404.4,220.8 404.5,220.5 404.6,220.2 404.7,220.0 404.8,219.9 404.9,220.1 405.0,220.4 405.1,220.8 405.2,221.2 405.3,221.6 405.4,222.1 405.5,222.6 405.6,223.1 405.7,223.7 405.7,224.3 405.8,224.9 405.9,225.5 406.0,226.2 406.1,226.8 406.2,227.4 406.3,228.0 406.4,228.6 406.5,229.1 406.6,229.6 406.7,230.1 406.8,230.5 406.9,230.9 407.0,231.3 407.1,231.5 407.2,231.8 407.3,231.7 407.4,231.3 407.5,230.8 407.6,230.1 407.7,229.4 407.8,228.6 407.9,227.7 408.0,226.8 408.1,225.9 408.2,224.9 408.3,223.9 408.4,223.0 408.5,222.1 408.6,221.3 408.7,220.5 408.8,219.9 408.8,219.3 408.9,218.9 409.0,218.7 409.1,219.1 409.2,219.8 409.3,220.5 409.4,221.4 409.5,222.4 409.6,223.4 409.7,224.5 409.8,225.6 409.9,226.7 410.0,227.7 410.1,228.6 410.2,229.4 410.3,230.0 410.4,230.5 410.5,230.4 410.6,229.9 410.7,229.2 410.8,228.4 410.9,227.4 411.0,226.4 411.1,225.2 411.2,224.0 411.3,222.8 411.4,221.5 411.5,220.3 411.6,219.2 411.7,218.1 411.8,217.2 411.9,216.4 412.0,215.7 412.0,215.2 412.1,215.2 412.2,215.5 412.3,215.9 412.4,216.4 412.5,217.0 412.6,217.6 412.7,218.3 412.8,219.0 412.9,219.8 413.0,220.6 413.1,221.3 413.2,222.1 413.3,222.8 413.4,223.5 413.5,224.1 413.6,224.6 413.7,225.1 413.8,225.5 413.9,225.8 414.0,225.7 414.1,225.3 414.2,224.9 414.3,224.4 414.4,223.8 414.5,223.1 414.6,222.4 414.7,221.7 414.8,220.9 414.9,220.2 415.0,219.6 415.1,219.0 415.1,218.4 415.2,218.0 415.3,217.6 415.4,217.5 415.5,217.9 415.6,218.5 415.7,219.2 415.8,220.0 415.9,221.0 416.0,222.0 416.1,223.0 416.2,224.1 416.3,225.3 416.4,226.4 416.5,227.4 416.6,228.4 416.7,229.3 416.8,230.1 416.9,230.8 417.0,231.4 417.1,231.8 417.2,232.0 417.3,232.2 417.4,232.4 417.5,232.6 417.6,232.9 417.7,233.2 417.8,233.6 417.9,234.0 418.0,234.4 418.1,234.8 418.2,235.2 418.2,235.6 418.3,236.1 418.4,236.5 418.5,236.9 418.6,237.3 418.7,237.8 418.8,238.2 418.9,238.5 419.0,238.9 419.1,239.2 419.2,239.5 419.3,239.7 419.4,240.0 419.5,240.1 419.6,240.3 419.7,239.9 419.8,239.4 419.9,238.7 420.0,238.0 420.1,237.1 420.2,236.2 420.3,235.2 420.4,234.1 420.5,233.0 420.6,231.8 420.7,230.7 420.8,229.6 420.9,228.5 421.0,227.5 421.1,226.6 421.2,225.7 421.3,225.0 421.4,224.3 421.4,223.8 421.5,223.4 421.6,223.3 421.7,223.1 421.8,222.8 421.9,222.5 422.0,222.2 422.1,221.8 422.2,221.4 422.3,221.0 422.4,220.5 422.5,220.1 422.6,219.6 422.7,219.2 422.8,218.7 422.9,218.3 423.0,217.9 423.1,217.5 423.2,217.2 423.3,216.9 423.4,216.6 423.5,216.4 423.6,216.2 423.6,212.2" fill="none" stroke="#5a6ea6" stroke-width="0.85"/>
<polyline points="423.6,216.2 423.6,212.2 424.3,245.6 425.0,220.4 425.6,229.2 426.3,226.6 426.9,217.6 427.6,218.2 428.2,224.8 428.8,229.4 429.4,220.0 430.0,213.7 430.6,214.3 431.2,229.8 431.7,228.4 432.3,222.5 432.8,233.9 433.4,215.6 433.9,226.0 434.4,220.8 435.0,217.9 435.5,226.2 436.0,219.1 436.5,212.0 437.0,216.2 437.5,217.5 438.0,214.8 438.4,215.9 438.9,224.6 439.4,220.4 439.8,225.5 440.3,220.4 440.8,220.1 441.2,220.2 441.6,235.9 442.1,222.3 442.5,218.8 442.9,220.1 443.4,221.9 443.8,239.0 444.2,221.7 444.6,224.3 445.0,222.0 445.4,217.8 445.8,213.2 446.2,211.9 446.6,214.1 446.9,216.2 447.3,223.7 447.7,218.4 448.1,217.0 448.4,220.6 448.8,214.5 449.2,222.2 449.5,224.5 449.9,220.5 450.2,235.6 450.6,221.5 450.9,221.0 451.3,212.8 451.6,211.0 452.0,211.8 452.3,218.4 452.6,219.7 452.9,230.1 453.3,233.0 453.6,223.9 453.9,230.5 454.2,224.6 454.5,223.0 454.9,221.5 455.2,219.7 455.5,218.2 455.8,212.7 456.1,215.3 456.4,219.3 456.7,218.9 457.0,226.3 457.3,218.8 457.6,223.0 457.9,245.6 458.1,227.7 458.4,219.4 458.7,215.3 459.0,214.7 459.3,212.5 459.5,215.4 459.8,236.2 460.1,212.3 460.4,215.6 460.6,224.0 460.9,221.8 461.2,216.0 461.4,213.2 461.7,224.9 461.9,236.0 462.2,229.8 462.5,226.0 462.7,222.0 463.0,214.8 463.2,225.1 463.5,223.2 463.7,220.6 464.0,218.5 464.2,216.8 464.5,226.9 464.7,226.3 464.9,235.3 465.2,223.8 465.4,226.0 465.7,212.2 465.9,211.2 466.1,211.9 466.4,212.2 466.6,214.3 466.8,214.4 467.0,212.4 467.3,220.9 467.5,220.2 467.7,231.0 467.9,224.8 468.2,226.3 468.4,227.3 468.6,216.8 468.8,215.1 469.0,223.8 469.3,228.0 469.5,218.4 469.7,212.7 469.9,212.0 470.1,215.2 470.3,223.7 470.5,217.5 470.7,225.6 470.9,216.6 471.1,212.1 471.3,212.5 471.5,218.7 471.7,233.7 471.9,220.9 472.1,218.0 472.3,219.6 472.5,216.2 472.7,216.8 472.9,231.5 473.1,231.6 473.3,221.1 473.5,214.9 473.7,218.7 473.9,217.9 474.1,218.7 474.3,223.5 474.5,221.9 474.7,225.4 474.8,216.1 475.0,212.3 475.2,211.7 475.4,212.2 475.6,214.2 475.8,221.3 475.9,214.2 476.1,211.9 476.3,218.7 476.5,219.8 476.7,215.7 476.8,213.0 477.0,218.8 477.2,224.4 477.4,220.9 477.5,221.5 477.7,224.4 477.9,215.0 478.1,219.1 478.2,215.7 478.4,216.8 478.6,215.7 478.7,216.6 478.9,215.5 479.1,227.9 479.2,223.5 479.4,214.2 479.6,215.8 479.7,213.9 479.9,212.3 480.1,213.3 480.2,214.6 480.4,221.0 480.5,219.3 480.7,213.7 480.9,208.9 481.0,216.6 481.2,216.0 481.3,216.8 481.5,215.3 481.6,212.5 481.8,215.9 482.0,216.5 482.1,214.8 482.3,216.9 482.4,214.8 482.6,205.2 482.7,211.5 482.9,204.7 483.0,206.5 483.2,215.1 483.3,210.9 483.5,204.1 483.6,209.4 483.8,207.0 483.9,208.1 484.1,203.9 484.2,202.0 484.4,201.3 484.5,200.6 484.7,214.1 484.8,202.4 484.9,202.3 485.1,206.1 485.2,199.6 485.4,204.7 485.5,199.8 485.6,199.9 485.8,206.0 485.9,203.4 486.1,197.3 486.2,196.1 486.3,208.5 486.5,197.2 486.6,205.4 486.8,194.7 486.9,201.7 487.0,200.9 487.2,197.7 487.3,206.6 487.4,199.8 487.6,207.3 487.7,197.4 487.8,196.7 488.0,210.5 488.1,205.4 488.2,196.9 488.4,200.0 488.5,210.9 488.6,198.4 488.8,200.9 488.9,206.2 489.0,209.0 489.1,209.1 489.3,208.0 489.4,211.5 489.5,200.9 489.7,201.7 489.8,200.9 489.9,203.2 490.0,202.1 490.2,210.6 490.3,204.6 490.4,202.1 490.5,214.6 490.7,211.9 490.8,204.0 490.9,203.3 491.0,213.8 491.2,204.2 491.3,204.3 491.4,217.1 491.5,213.3 491.6,209.8 491.8,205.6 491.9,210.0 492.0,207.9 492.1,210.3 492.2,206.4 492.4,213.2 492.5,214.2 492.6,213.6 492.7,214.4 492.8,213.7 492.9,218.2 493.1,218.9 493.2,210.8 493.3,222.1 493.4,216.2 493.5,209.5 493.6,213.8 493.8,215.8 493.9,219.8 494.0,212.1 494.1,213.5 494.2,212.0 494.3,212.9 494.4,221.0 494.5,214.5 494.7,221.3 494.8,225.5 494.9,224.7 495.0,220.3 495.1,210.7 495.2,215.1 495.3,223.2 495.4,223.0 495.5,218.2 495.6,213.4 495.8,218.2 495.9,216.9 496.0,219.5 496.1,214.2 496.2,214.3 496.3,215.1 496.4,217.0 496.5,219.4 496.6,220.8 496.7,215.9 496.8,220.2 496.9,215.5 497.0,216.7 497.1,222.7 497.2,223.9 497.3,219.3 497.5,215.8 497.6,222.3 497.7,220.9 497.8,216.4 497.9,214.9 498.0,221.4 498.1,215.2 498.2,218.5 498.3,227.3 498.4,232.8 498.5,222.7 498.6,216.0 498.7,217.6 498.8,221.7 498.9,231.5 499.0,232.4 499.1,224.4 499.2,218.5 499.3,226.4 499.4,225.5 499.5,221.1 499.6,229.5 499.7,221.9 499.8,220.1 499.9,222.5 500.0,217.6 500.1,216.4 500.2,226.5 500.3,225.3 500.4,226.8 500.4,223.8 500.5,227.7 500.6,228.0 500.7,219.0 500.8,222.4 500.9,221.9 501.0,217.7 501.1,215.5 501.2,223.6 501.3,224.3 501.4,217.9 501.5,229.0 501.6,222.8 501.7,222.9 501.8,227.5 501.9,219.2 502.0,219.4 502.0,232.4 502.1,231.2 502.2,230.0 502.3,233.5 502.4,225.3 502.5,225.0 502.6,233.1 502.7,227.7 502.8,225.1 502.9,224.7 503.0,232.0 503.1,226.2 503.1,226.6 503.2,222.7 503.3,226.5 503.4,233.5 503.5,226.9 503.6,228.1 503.7,230.7 503.8,224.9 503.9,227.2 503.9,226.4 504.0,231.9 504.1,234.6 504.2,223.2 504.3,218.6 504.4,223.3 504.5,232.5 504.6,237.3 504.6,223.8 504.7,219.2 504.8,227.1 504.9,229.3 505.0,227.3 505.1,225.9 505.2,240.8 505.2,233.6 505.3,230.8 505.4,230.8 505.5,226.6 505.6,225.1 505.7,228.2 505.7,233.1 505.8,222.0 505.9,219.5 506.0,221.3 506.1,226.2 506.2,241.7 506.2,235.3 506.3,229.5 506.4,225.8 506.5,243.8 506.6,220.8 506.7,223.6 506.7,226.3 506.8,223.0 506.9,219.8 507.0,219.4 507.1,221.7 507.1,229.8 507.2,225.3 507.3,230.1 507.4,223.0 507.5,236.3 507.5,231.1 507.6,224.6 507.7,224.8 507.8,227.9 507.9,222.0 507.9,222.1 508.0,223.6 508.1,229.5 508.2,224.2 508.3,221.1 508.3,236.2 508.4,227.8 508.5,224.3 508.6,228.2 508.7,239.3 508.7,222.8 508.8,224.0 508.9,234.6 509.0,225.5 509.0,233.0 509.1,229.9 509.2,230.2 509.3,223.7 509.3,219.7 509.4,230.9 509.5,244.7 509.6,236.0 509.6,224.7 509.7,225.7 509.8,245.6 509.9,220.7 510.0,221.9 510.0,218.5 510.1,214.3 510.2,214.2 510.3,228.2 510.3,224.9 510.4,233.2 510.5,228.5 510.5,231.0 510.6,229.5 510.7,231.8 510.8,222.0 510.8,232.3 510.9,226.1 511.0,226.4 511.1,225.4 511.1,216.4 511.2,214.6 511.3,216.9 511.4,226.2 511.4,231.4 511.5,218.0 511.6,218.8 511.6,229.2 511.7,232.4 511.8,231.8 511.9,229.5 511.9,224.4 512.0,215.4 512.1,223.7 512.1,242.3 512.2,228.7 512.3,233.9 512.4,231.9 512.4,225.1 512.5,223.8 512.6,229.3 512.6,227.3 512.7,225.5 512.8,223.3 512.9,220.2 512.9,227.5 513.0,241.0 513.1,243.3 513.1,245.6 513.2,230.8 513.3,222.1 513.3,225.2 513.4,224.7 513.5,222.2 513.5,245.6 513.6,224.6 513.7,221.1 513.7,220.3 513.8,220.1 513.9,230.0 514.0,245.6 514.0,228.2 514.1,226.9 514.2,229.8 514.2,221.5 514.3,221.2 514.4,233.7 514.4,223.5 514.5,221.5 514.6,227.4 514.6,237.6 514.7,232.1 514.8,229.6 514.8,238.5 514.9,229.4 515.0,215.5 515.0,219.9 515.1,224.0 515.2,230.4 515.2,230.4 515.3,219.4 515.4,219.8 515.4,230.0 515.5,226.3 515.5,233.8 515.6,225.5 515.7,227.3 515.7,216.9 515.8,217.2 515.9,224.7 515.9,230.3 516.0,243.8 516.1,223.4 516.1,222.0 516.2,231.2 516.3,225.6 516.3,234.5 516.4,232.3 516.5,231.1 516.5,231.2 516.6,233.2 516.6,224.5 516.7,220.6 516.8,223.5 516.8,225.2 516.9,220.5 517.0,218.8 517.0,218.8 517.1,219.9 517.1,224.8 517.2,228.9 517.3,230.1 517.3,223.4 517.4,220.3 517.5,227.0 517.5,227.2 517.6,237.5 517.6,229.2 517.7,219.4 517.8,220.2 517.8,229.8 517.9,245.6 517.9,227.2 518.0,224.1 518.1,226.5 518.1,227.6 518.2,224.1 518.3,228.8 518.3,231.2 518.4,228.4 518.4,225.0 518.5,227.3 518.6,228.0 518.6,217.1 518.7,215.6 518.7,229.8 518.8,220.7 518.9,230.1 518.9,228.0 519.0,226.0 519.0,227.3 519.1,225.4 519.2,225.4 519.2,228.7 519.3,229.5 519.3,245.6 519.4,224.2 519.5,219.4 519.5,217.2 519.6,224.0 519.6,224.1 519.7,217.7 519.7,220.8 519.8,219.6 519.9,226.0 519.9,228.5 520.0,219.8 520.0,217.7 520.1,229.4 520.2,223.5 520.2,222.6 520.3,227.9 520.3,234.8 520.4,230.1 520.4,223.5 520.5,223.9 520.6,235.5 520.6,229.1 520.7,227.7 520.7,233.6 520.8,231.5 520.8,226.0 520.9,225.1 521.0,229.0 521.0,245.6 521.1,227.7 521.1,221.0 521.2,222.7 521.2,221.2 521.3,225.0 521.3,235.0 521.4,232.6 521.5,235.4 521.5,223.8 521.6,219.7 521.6,220.8 521.7,232.6 521.7,233.2 521.8,231.5 521.8,216.2 521.9,215.3 522.0,221.4 522.0,232.8 522.1,218.8 522.1,217.0 522.2,223.6 522.2,232.8 522.3,214.9 522.3,215.3 522.4,232.2 522.5,245.6 522.5,236.8 522.6,245.6 522.6,240.1 522.7,230.0 522.7,224.7 522.8,231.7 522.8,222.1 522.9,223.9 522.9,232.1 523.0,231.2 523.0,230.4 523.1,222.4 523.2,217.4 523.2,226.4 523.3,227.2 523.3,229.3 523.4,219.3 523.4,226.5 523.5,226.8 523.5,236.3 523.6,232.2 523.6,221.6 523.7,241.4 523.7,226.1 523.8,224.6 523.8,219.9 523.9,232.9 524.0,230.8 524.0,226.0 524.1,229.7 524.1,239.1 524.2,223.2 524.2,228.4 524.3,232.9 524.3,230.4 524.4,227.3 524.4,223.2 524.5,223.2 524.5,228.3 524.6,226.9 524.6,217.5 524.7,218.3 524.7,218.3 524.8,221.3 524.8,235.4 524.9,222.7 524.9,216.7 525.0,222.7 525.0,232.6 525.1,236.0 525.1,244.8 525.2,222.2 525.2,219.3 525.3,245.6 525.3,217.9 525.4,215.9 525.4,233.0 525.5,221.9 525.5,221.9 525.6,222.8 525.6,220.9 525.7,230.0 525.7,227.4 525.8,244.6 525.8,225.4 525.9,222.3 525.9,219.4 526.0,219.7 526.0,223.2 526.1,223.3 526.1,225.5 526.2,229.7 526.2,218.5 526.3,222.7 526.3,220.9 526.4,226.5 526.4,224.6 526.5,223.0 526.5,227.1 526.6,227.7 526.6,215.0 526.7,214.1 526.7,221.6 526.8,234.2 526.8,228.4 526.9,224.5 526.9,228.6 527.0,231.5 527.0,235.2 527.1,228.8 527.1,221.2 527.2,237.9 527.2,233.6 527.3,231.9 527.3,222.3 527.4,228.8 527.4,226.3 527.5,223.9 527.5,230.8 527.6,244.8 527.6,244.5 527.7,245.4 527.7,224.9 527.7,230.5 527.8,243.8 527.8,227.1 527.9,223.6 527.9,241.7 528.0,229.2 528.0,233.9 528.1,241.6 528.1,232.8 528.2,230.7 528.2,236.8 528.3,225.4 528.3,225.9 528.4,224.2 528.4,218.0 528.5,216.4 528.5,218.2 528.5,218.4 528.6,218.8 528.6,224.0 528.7,223.8 528.7,228.9 528.8,219.6 528.8,223.1 528.9,230.5 528.9,222.4 529.0,220.9 529.0,227.5 529.1,218.4 529.1,228.1 529.1,224.0 529.2,231.5 529.2,228.2 529.3,223.3 529.3,222.2 529.4,227.0 529.4,222.9 529.5,222.1 529.5,214.7 529.6,214.0 529.6,219.9 529.7,235.8 529.7,234.9 529.7,224.8 529.8,220.4 529.8,217.0 529.9,219.5 529.9,224.2 530.0,238.2 530.0,224.5 530.1,229.4 530.1,245.6 530.1,240.7 530.2,231.4 530.2,229.7 530.3,228.3 530.3,222.7 530.4,215.4 530.4,232.6 530.5,221.2 530.5,226.4 530.5,234.2 530.6,229.8 530.6,222.0 530.7,226.8 530.7,228.5 530.8,236.3 530.8,245.6 530.9,228.6 530.9,224.5 530.9,245.6 531.0,226.9 531.0,220.6 531.1,223.1 531.1,221.8 531.2,217.0 531.2,221.5 531.2,220.8 531.3,219.2 531.3,220.6 531.4,227.8 531.4,217.2 531.5,216.2 531.5,225.2 531.6,223.4 531.6,221.3 531.6,229.6 531.7,237.3 531.7,237.0 531.8,219.3 531.8,220.4 531.9,219.6 531.9,222.1 531.9,230.7 532.0,226.1 532.0,221.8 532.1,232.5 532.1,245.6 532.2,221.7 532.2,220.0 532.2,216.3 532.3,214.9 532.3,219.8 532.4,231.1 532.4,232.9 532.4,235.9 532.5,245.6 532.5,245.5 532.6,242.1 532.6,228.1 532.7,215.4 532.7,217.0 532.7,231.5 532.8,226.8 532.8,218.4 532.9,221.1 532.9,228.2 532.9,235.4 533.0,220.8 533.0,224.1 533.1,227.3 533.1,225.1 533.2,218.8 533.2,219.0 533.2,245.6 533.3,224.0 533.3,221.0 533.4,218.1 533.4,225.6 533.4,226.6 533.5,217.3 533.5,225.0 533.6,245.6 533.6,219.5 533.7,218.8 533.7,227.5 533.7,218.6 533.8,215.5 533.8,218.3 533.9,216.7 533.9,216.1 533.9,220.5 534.0,219.0 534.0,221.8 534.1,228.2 534.1,226.1 534.1,218.4 534.2,225.0 534.2,245.6 534.3,227.1 534.3,219.7 534.3,237.3 534.4,242.1 534.4,229.9 534.5,231.7 534.5,219.5 534.5,220.4 534.6,222.7 534.6,216.6 534.7,219.9 534.7,242.9 534.7,222.7 534.8,217.2 534.8,215.5 534.9,221.9 534.9,228.9 534.9,222.5 535.0,218.5 535.0,218.4 535.1,220.0 535.1,234.3 535.1,223.5 535.2,223.7 535.2,233.1 535.3,226.8 535.3,230.9 535.3,238.9 535.4,232.8 535.4,221.0 535.4,222.6 535.5,219.9 535.5,218.8 535.6,223.8 535.6,229.1 535.6,236.0 535.7,237.0 535.7,237.5 535.8,235.0 535.8,226.7 535.8,218.6 535.9,219.0 535.9,220.7 536.0,223.0 536.0,229.8 536.0,224.8 536.1,225.1 536.1,225.2 536.1,229.4 536.2,231.8 536.2,232.9 536.3,234.8 536.3,227.0 536.3,223.6 536.4,217.7 536.4,216.4 536.4,218.2 536.5,227.2 536.5,223.8 536.6,221.3 536.6,222.6 536.6,218.8 536.7,234.3 536.7,224.1 536.8,230.7 536.8,222.1 536.8,232.5 536.9,239.0 536.9,245.6 536.9,218.5 537.0,214.1 537.0,215.4 537.1,227.3 537.1,223.8 537.1,224.7 537.2,216.2 537.2,214.7 537.2,218.6 537.3,220.7 537.3,234.7 537.4,244.2 537.4,226.9 537.4,220.4 537.5,226.6 537.5,245.6 537.5,235.8 537.6,227.6 537.6,218.3 537.6,232.0 537.7,236.2 537.7,229.9 537.8,237.7 537.8,236.3 537.8,234.7 537.9,245.6 537.9,223.6 537.9,219.4 538.0,214.9 538.0,216.0 538.1,230.0 538.1,220.5 538.1,220.0 538.2,215.5 538.2,220.4 538.2,235.4 538.3,219.2 538.3,225.0 538.3,228.1 538.4,231.8 538.4,232.2 538.4,226.4 538.5,223.3 538.5,222.0 538.6,219.3 538.6,244.8 538.6,225.4 538.7,222.9 538.7,223.5 538.7,237.9 538.8,229.1 538.8,223.0 538.8,216.7 538.9,221.1 538.9,236.4 539.0,217.5 539.0,216.8 539.0,236.1 539.1,225.9 539.1,226.0 539.1,229.2 539.2,239.9 539.2,245.6 539.2,245.2 539.3,245.2 539.3,245.6 539.3,236.8 539.4,238.8 539.4,228.3 539.4,235.7 539.5,245.6 539.5,230.5 539.6,222.0 539.6,235.2 539.6,231.3 539.7,221.9 539.7,228.1 539.7,229.4 539.8,218.6 539.8,221.4 539.8,224.0 539.9,229.6 539.9,245.6 539.9,232.3 540.0,232.7 540.0,232.6 540.0,227.0 540.1,221.9 540.1,222.5 540.1,223.6 540.2,219.7 540.2,219.0 540.2,237.1 540.3,227.1 540.3,224.6 540.4,232.2 540.4,235.0 540.4,223.0 540.5,220.0 540.5,225.2 540.5,231.4 540.6,222.9 540.6,216.0 540.6,221.2 540.7,222.0 540.7,233.8 540.7,245.6 540.8,227.0 540.8,225.0 540.8,233.8 540.9,235.4 540.9,237.9 540.9,245.6 541.0,223.1 541.0,220.8 541.0,227.2 541.1,235.4 541.1,226.0 541.1,222.0 541.2,215.4 541.2,219.3 541.2,238.4 541.3,231.0 541.3,245.6 541.3,230.5 541.4,224.4 541.4,224.4 541.4,228.4 541.5,228.9 541.5,228.5 541.5,225.1 541.6,237.9 541.6,228.7 541.6,230.8 541.7,232.7 541.7,229.9 541.7,226.9 541.8,222.4 541.8,229.4 541.8,231.6 541.9,228.4 541.9,229.5 541.9,245.6 542.0,230.4 542.0,225.2 542.0,219.3 542.1,222.5 542.1,231.4 542.1,215.9 542.2,224.8 542.2,229.9 542.2,220.0 542.3,218.5 542.3,215.1 542.3,215.5 542.4,216.3 542.4,232.2 542.4,233.1 542.5,241.2 542.5,233.8 542.5,245.6 542.6,229.9 542.6,239.1 542.6,221.6 542.7,231.5 542.7,223.7 542.7,220.0 542.8,231.6 542.8,237.1 542.8,222.8 542.8,219.3 542.9,220.4 542.9,224.1 542.9,221.8 543.0,223.1 543.0,228.5 543.0,234.1 543.1,225.5 543.1,240.5 543.1,224.9 543.2,218.7 543.2,222.3 543.2,227.7 543.3,236.4 543.3,235.3 543.3,245.6 543.4,232.5 543.4,227.1 543.4,223.0 543.5,220.3 543.5,225.3 543.5,241.5 543.6,233.6 543.6,236.7 543.6,231.3 543.6,226.2 543.7,221.3 543.7,223.8 543.7,221.6 543.8,221.8 543.8,219.3 543.8,215.3 543.9,220.5 543.9,242.8 543.9,217.1 544.0,215.4 544.0,220.0 544.0,221.4 544.1,233.8 544.1,219.7 544.1,224.0 544.1,224.5 544.2,221.9 544.2,228.3 544.2,228.7 544.3,231.3 544.3,226.9 544.3,224.6 544.4,225.4 544.4,223.0 544.4,223.2 544.5,221.9 544.5,227.0 544.5,245.6 544.6,218.2 544.6,220.4 544.6,229.3 544.6,223.8 544.7,217.7 544.7,215.3 544.7,225.3 544.8,231.7 544.8,227.1 544.8,224.9 544.9,227.6 544.9,240.8 544.9,232.3 545.0,225.8 545.0,235.7 545.0,245.1 545.0,239.6 545.1,245.6 545.1,233.8 545.1,234.7 545.2,222.6 545.2,225.8 545.2,230.0 545.3,222.6 545.3,219.1 545.3,222.9 545.3,225.1 545.4,225.5 545.4,222.1 545.4,226.7 545.5,215.6 545.5,219.0 545.5,239.1 545.6,245.6 545.6,221.4 545.6,222.5 545.6,228.0 545.7,229.5 545.7,237.3 545.7,245.6 545.8,225.8 545.8,223.0 545.8,231.3 545.9,237.8 545.9,231.8 545.9,227.3 545.9,230.1 546.0,225.4 546.0,229.4 546.0,224.0 546.1,216.5 546.1,218.6 546.1,223.9 546.2,235.2 546.2,218.8 546.2,218.1 546.2,226.3 546.3,240.7 546.3,245.6 546.3,236.6 546.4,230.2 546.4,227.9 546.4,229.6 546.4,224.9 546.5,217.7 546.5,223.9 546.5,224.0 546.6,217.5 546.6,221.4 546.6,231.0 546.7,227.7 546.7,233.4 546.7,237.3 546.7,233.6 546.8,233.7 546.8,220.4 546.8,215.6 546.9,227.0 546.9,218.9 546.9,220.9 546.9,231.8 547.0,222.5 547.0,222.3 547.0,225.2 547.1,245.6 547.1,230.3 547.1,231.9 547.1,234.8 547.2,240.8 547.2,245.3 547.2,230.3 547.3,220.5 547.3,219.8 547.3,241.4 547.3,229.1 547.4,218.5 547.4,214.3 547.4,218.0 547.5,229.9 547.5,233.3 547.5,222.2 547.6,234.8 547.6,231.8 547.6,220.3 547.6,220.7 547.7,235.1 547.7,231.0 547.7,229.3 547.7,230.7 547.8,226.8 547.8,224.4 547.8,226.5 547.9,245.6 547.9,233.4 547.9,222.0 547.9,217.8 548.0,228.8 548.0,230.7 548.0,229.8 548.1,240.6 548.1,232.0 548.1,245.6 548.1,225.4 548.2,216.8 548.2,215.6 548.2,221.4 548.3,245.6 548.3,231.5 548.3,226.0 548.3,232.5 548.4,224.8 548.4,222.7 548.4,228.5 548.5,223.2 548.5,228.1 548.5,227.2 548.5,234.6 548.6,229.0 548.6,235.1 548.6,223.9 548.6,222.8 548.7,223.5 548.7,223.1 548.7,215.5 548.8,234.9 548.8,221.4 548.8,225.1 548.8,231.6 548.9,231.2 548.9,227.6 548.9,222.0 549.0,222.7 549.0,239.3 549.0,222.9 549.0,224.5 549.1,228.3 549.1,237.8 549.1,238.6 549.1,231.7 549.2,231.5 549.2,223.1 549.2,219.2 549.3,226.7 549.3,230.5 549.3,238.4 549.3,237.1 549.4,223.3 549.4,221.5 549.4,234.9 549.4,221.4 549.5,216.9 549.5,221.0 549.5,218.1 549.6,217.2 549.6,217.2 549.6,222.5 549.6,238.6 549.7,217.8 549.7,218.4 549.7,226.8 549.7,222.6 549.8,218.3 549.8,221.8 549.8,227.9 549.9,225.1 549.9,223.7 549.9,236.0 549.9,234.7 550.0,221.0 550.0,231.1 550.0,227.4 550.0,228.8 550.1,227.9 550.1,225.4 550.1,245.6 550.1,240.2 550.2,225.1 550.2,218.9 550.2,221.8 550.3,224.7 550.3,245.6 550.3,219.9 550.3,220.8 550.4,233.5 550.4,233.8 550.4,242.4 550.4,242.3 550.5,229.6 550.5,223.0 550.5,238.5 550.5,236.4 550.6,222.2 550.6,217.8 550.6,221.2 550.7,221.5 550.7,234.2 550.7,228.8 550.7,223.6 550.8,228.7 550.8,218.2 550.8,215.3 550.8,235.8 550.9,217.8 550.9,219.5 550.9,215.3 550.9,214.4 551.0,216.0 551.0,219.7 551.0,225.3 551.0,233.8 551.1,241.0 551.1,230.8 551.1,222.0 551.1,228.5 551.2,219.2 551.2,230.6 551.2,245.6 551.3,242.4 551.3,238.2 551.3,243.2 551.3,229.5 551.4,230.7 551.4,235.3 551.4,229.0 551.4,227.6 551.5,222.4 551.5,239.6 551.5,222.9 551.5,223.7 551.6,225.8 551.6,231.6 551.6,232.3 551.6,222.9 551.7,221.0 551.7,229.4 551.7,229.0 551.7,220.7 551.8,224.1 551.8,237.8 551.8,228.9 551.8,224.7 551.9,224.5 551.9,245.0 551.9,231.9 551.9,218.9 552.0,220.7 552.0,232.1 552.0,230.8 552.0,243.9 552.1,245.6 552.1,224.3 552.1,216.3 552.2,219.3 552.2,222.2 552.2,221.1 552.2,231.3 552.3,238.1 552.3,231.4 552.3,236.9 552.3,228.0 552.4,218.5 552.4,220.1 552.4,222.0 552.4,229.1 552.5,231.1 552.5,219.9 552.5,218.7 552.5,217.4 552.6,218.9 552.6,241.6 552.6,227.4 552.6,220.6 552.7,224.1 552.7,226.5 552.7,222.6 552.7,232.7 552.8,242.3 552.8,233.7 552.8,232.2 552.8,221.7 552.9,220.3 552.9,224.5 552.9,223.4 552.9,224.6 553.0,230.7 553.0,244.9 553.0,232.3 553.0,223.8 553.1,229.9 553.1,230.0 553.1,224.2 553.1,245.6 553.2,224.7 553.2,230.1 553.2,226.9 553.2,224.8 553.3,235.4 553.3,232.5 553.3,226.7 553.3,216.0 553.3,218.1 553.4,216.8 553.4,225.3 553.4,233.9 553.4,228.8 553.5,221.0 553.5,227.8 553.5,232.2 553.5,232.1 553.6,238.2 553.6,231.1 553.6,230.6 553.6,219.0 553.7,219.2 553.7,219.6 553.7,217.0 553.7,220.0 553.8,223.4 553.8,223.0 553.8,235.5 553.8,226.5 553.9,225.9 553.9,223.3 553.9,221.8 553.9,245.6 554.0,226.0 554.0,228.9 554.0,231.6 554.0,229.9 554.1,228.6 554.1,226.3 554.1,232.7 554.1,232.6 554.2,229.8 554.2,228.5 554.2,230.0 554.2,226.9 554.2,234.2 554.3,229.5 554.3,229.0 554.3,239.5 554.3,231.3 554.4,225.0 554.4,218.3 554.4,220.8 554.4,223.7 554.5,232.9 554.5,237.9 554.5,245.6 554.5,225.8 554.6,222.8 554.6,236.8 554.6,224.4 554.6,222.2 554.7,223.5 554.7,224.5 554.7,229.6 554.7,225.9 554.8,229.5 554.8,233.1 554.8,232.8 554.8,243.2 554.8,221.3 554.9,221.1 554.9,233.0 554.9,231.5 554.9,222.2 555.0,235.4 555.0,220.6 555.0,224.2 555.0,223.7 555.1,221.8 555.1,221.7 555.1,221.8 555.1,244.7 555.2,225.4 555.2,225.7 555.2,241.1 555.2,224.6 555.2,220.5 555.3,227.2 555.3,245.6 555.3,240.1 555.3,237.2 555.4,235.4 555.4,229.7 555.4,224.8 555.4,231.9 555.5,237.2 555.5,224.4 555.5,223.8 555.5,221.8 555.5,225.0 555.6,231.2 555.6,223.6 555.6,222.4 555.6,229.5 555.7,240.0 555.7,221.5 555.7,222.0 555.7,220.8 555.8,229.5 555.8,233.0 555.8,229.8 555.8,222.5 555.9,220.3 555.9,227.3 555.9,232.6 555.9,226.7 555.9,225.8 556.0,237.6 556.0,227.9 556.0,233.4 556.0,232.4 556.1,220.1 556.1,221.5 556.1,229.2 556.1,245.6 556.1,227.7 556.2,227.9 556.2,237.5 556.2,219.8 556.2,231.8 556.3,222.4 556.3,216.3 556.3,215.9 556.3,223.9 556.4,225.3 556.4,235.4 556.4,225.9 556.4,225.5 556.4,222.1 556.5,222.6 556.5,232.4 556.5,245.6 556.5,233.1 556.6,224.3 556.6,234.8 556.6,229.6 556.6,223.0 556.6,224.3 556.7,234.8 556.7,239.7 556.7,224.9 556.7,222.7 556.8,216.0 556.8,220.0 556.8,224.4 556.8,229.5 556.9,224.8 556.9,221.0 556.9,222.9 556.9,227.6 556.9,225.9 557.0,230.5 557.0,230.1 557.0,230.8 557.0,235.3 557.1,245.6 557.1,228.5 557.1,224.7 557.1,227.4 557.1,222.4 557.2,219.5 557.2,222.9 557.2,221.5 557.2,215.6 557.3,220.9 557.3,230.6 557.3,236.8 557.3,216.7 557.3,215.3 557.4,217.2 557.4,233.2 557.4,229.7 557.4,229.0 557.5,221.3 557.5,229.5 557.5,222.6 557.5,227.0 557.5,232.5 557.6,220.3 557.6,219.0 557.6,218.3 557.6,217.6 557.7,221.6 557.7,222.0 557.7,240.5 557.7,220.4 557.7,226.8 557.8,223.3 557.8,230.8 557.8,232.2 557.8,231.7 557.9,245.6 557.9,242.6 557.9,242.8 557.9,234.2 557.9,237.1 558.0,215.3 558.0,217.3 558.0,220.9 558.0,222.6 558.0,231.0 558.1,228.4 558.1,233.9 558.1,232.1 558.1,231.5 558.2,245.6 558.2,224.1 558.2,231.7 558.2,237.7 558.2,226.0 558.3,223.3 558.3,228.8 558.3,236.9 558.3,244.8 558.4,239.3 558.4,224.1 558.4,222.1 558.4,226.6 558.4,228.0 558.5,245.6 558.5,245.6 558.5,227.3 558.5,227.4 558.5,245.6 558.6,234.7 558.6,229.1 558.6,237.4 558.6,220.5 558.7,227.0 558.7,245.6 558.7,243.2 558.7,222.7 558.7,215.8 558.8,221.0 558.8,228.5 558.8,231.1 558.8,224.2 558.8,236.2 558.9,226.0 558.9,222.1 558.9,224.0 558.9,222.4 559.0,221.9 559.0,225.9 559.0,242.2 559.0,219.8 559.0,228.3 559.1,225.5 559.1,230.5 559.1,224.6 559.1,224.7 559.1,228.6 559.2,229.1 559.2,231.8 559.2,223.4 559.2,226.5 559.2,237.3 559.3,232.7 559.3,224.1 559.3,226.3 559.3,231.2 559.4,227.3 559.4,220.9 559.4,224.4 559.4,231.0 559.4,225.2 559.5,223.4 559.5,221.5 559.5,222.6 559.5,234.7 559.5,238.8 559.6,231.2 559.6,237.8 559.6,232.7 559.6,225.0 559.6,218.3 559.7,216.0 559.7,222.5 559.7,233.0 559.7,217.0 559.8,214.9 559.8,224.6 559.8,235.1 559.8,219.0 559.8,214.5 559.9,214.4 559.9,220.0 559.9,217.8 559.9,218.1 559.9,218.3 560.0,227.4 560.0,240.9 560.0,223.6 560.0,224.3 560.0,221.1 560.1,222.0 560.1,220.2 560.1,221.9 560.1,222.7 560.1,220.5 560.2,220.6 560.2,220.6 560.2,223.4 560.2,245.3 560.3,233.7 560.3,226.6 560.3,222.9 560.3,227.0 560.3,231.6 560.4,231.1 560.4,232.8 560.4,221.9 560.4,234.9 560.4,240.3 560.5,223.4 560.5,223.1 560.5,227.0 560.5,223.2 560.5,221.2 560.6,218.8 560.6,225.5 560.6,245.6 560.6,245.6 560.6,227.8 560.7,238.3 560.7,231.7 560.7,230.7 560.7,235.7 560.7,236.4 560.8,238.2 560.8,227.5 560.8,226.8 560.8,232.2 560.8,230.2 560.9,220.0 560.9,224.3 560.9,245.6 560.9,234.5 560.9,224.7 561.0,226.3 561.0,222.5 561.0,220.1 561.0,229.4 561.0,230.1 561.1,224.5 561.1,228.5 561.1,239.6 561.1,232.7 561.1,224.1 561.2,234.9 561.2,227.3 561.2,229.2 561.2,227.6 561.2,229.9 561.3,244.1 561.3,236.6 561.3,225.0 561.3,215.4 561.3,219.7 561.4,230.0 561.4,223.1 561.4,223.1 561.4,233.7 561.4,225.2 561.5,232.7 561.5,222.9 561.5,221.0 561.5,226.3 561.5,225.7 561.6,227.4 561.6,232.6 561.6,228.6 561.6,229.8 561.6,227.7 561.7,228.6 561.7,224.0 561.7,226.7 561.7,238.5 561.7,226.9 561.8,225.5 561.8,229.9 561.8,233.8 561.8,218.1 561.8,217.9 561.9,245.6 561.9,220.8 561.9,218.3 561.9,216.5 561.9,223.0 562.0,241.8 562.0,225.5 562.0,217.4 562.0,224.8 562.0,227.9 562.1,220.4 562.1,215.0 562.1,219.9 562.1,231.3 562.1,218.6 562.2,214.8 562.2,221.2 562.2,222.6 562.2,215.1 562.2,216.1 562.3,222.3 562.3,221.6 562.3,226.1 562.3,224.3 562.3,235.1 562.4,245.6 562.4,228.4 562.4,218.6 562.4,224.6 562.4,222.9 562.5,222.2 562.5,240.6 562.5,227.6 562.5,230.5 562.5,218.2 562.5,221.1 562.6,227.6 562.6,233.6 562.6,236.3 562.6,229.1 562.6,235.8 562.7,222.7 562.7,222.4 562.7,219.6 562.7,224.8 562.7,237.0 562.8,224.8 562.8,217.6 562.8,221.3 562.8,214.9 562.8,216.3 562.9,225.0 562.9,231.1 562.9,224.8 562.9,226.0 562.9,239.4 563.0,233.2 563.0,245.6 563.0,236.3 563.0,236.8 563.0,238.3 563.1,225.6 563.1,238.4 563.1,231.6 563.1,227.2 563.1,217.5 563.1,216.0 563.2,227.3 563.2,223.4 563.2,216.0 563.2,222.7 563.2,217.5 563.3,220.1 563.3,241.1 563.3,244.0 563.3,237.3 563.3,224.1 563.4,227.1 563.4,241.5 563.4,223.2 563.4,218.9 563.4,231.4 563.5,230.4 563.5,220.5 563.5,216.9 563.5,223.4 563.5,220.2 563.5,218.3 563.6,226.2 563.6,229.0 563.6,230.6 563.6,223.2 563.6,235.6 563.7,230.3 563.7,237.4 563.7,227.0 563.7,230.5 563.7,232.8 563.8,233.4 563.8,219.7 563.8,219.5 563.8,215.6 563.8,216.8 563.8,223.7 563.9,225.7 563.9,226.6 563.9,226.9 563.9,226.6 563.9,220.7 564.0,226.1 564.0,235.1 564.0,226.5 564.0,226.2 564.0,237.5 564.1,237.5 564.1,224.0 564.1,219.1 564.1,225.9 564.1,230.6 564.1,233.0 564.2,229.1 564.2,231.1 564.2,218.3 564.2,215.0 564.2,216.0 564.3,224.3 564.3,225.9 564.3,228.2 564.3,228.2 564.3,225.3 564.4,222.7 564.4,228.0 564.4,232.2 564.4,227.6 564.4,225.5 564.4,223.1 564.5,227.6 564.5,219.5 564.5,245.6 564.5,216.8 564.5,220.2 564.6,227.9 564.6,219.2 564.6,245.6 564.6,230.7 564.6,245.6 564.6,227.7 564.7,223.0 564.7,222.5 564.7,224.1 564.7,236.4 564.7,230.7 564.8,245.4 564.8,223.9 564.8,217.5 564.8,218.5 564.8,234.6 564.8,219.9 564.9,234.1 564.9,227.2 564.9,245.6 564.9,231.8 564.9,244.2 565.0,236.6 565.0,229.8 565.0,220.7 565.0,230.5 565.0,237.4 565.0,232.9 565.1,230.0 565.1,232.4 565.1,232.9 565.1,228.5 565.1,221.8 565.2,228.7 565.2,228.6 565.2,223.5 565.2,233.3 565.2,224.4 565.2,218.0 565.3,218.8 565.3,225.5 565.3,236.1 565.3,236.5 565.3,221.6 565.4,223.2 565.4,232.5 565.4,226.2 565.4,245.4 565.4,225.8 565.4,223.8 565.5,232.6 565.5,228.8 565.5,237.7 565.5,230.7 565.5,231.2 565.6,245.5 565.6,224.5 565.6,222.7 565.6,229.6 565.6,225.9 565.6,241.0 565.7,231.8 565.7,234.6 565.7,222.2 565.7,228.5 565.7,226.0 565.8,223.4 565.8,220.1 565.8,221.3 565.8,222.7 565.8,225.5 565.8,230.8 565.9,234.6 565.9,237.1 565.9,225.2 565.9,219.9 565.9,221.7 565.9,226.1 566.0,222.0 566.0,240.2 566.0,218.5 566.0,227.6 566.0,235.5 566.1,244.7 566.1,223.7 566.1,220.3 566.1,218.4 566.1,225.4 566.1,216.8 566.2,225.4 566.2,230.5 566.2,220.3 566.2,217.0 566.2,219.3 566.2,224.1 566.3,221.7 566.3,222.1 566.3,221.0 566.3,227.9 566.3,234.7 566.4,245.6 566.4,223.0 566.4,223.1 566.4,245.6 566.4,245.6 566.4,227.7 566.5,228.8 566.5,224.7 566.5,217.2 566.5,224.7 566.5,230.2 566.5,230.4 566.6,240.8 566.6,230.3 566.6,237.5 566.6,239.9 566.6,245.6 566.7,234.9 566.7,227.6 566.7,221.4 566.7,224.1 566.7,229.0 566.7,232.7 566.8,224.7 566.8,227.2 566.8,227.0 566.8,219.6 566.8,228.7 566.8,215.6 566.9,223.8 566.9,245.6 566.9,234.6 566.9,236.3 566.9,216.3 566.9,221.0 567.0,234.8 567.0,219.8 567.0,225.1 567.0,245.6 567.0,240.5 567.1,240.3 567.1,228.3 567.1,216.3 567.1,219.2 567.1,236.1 567.1,227.5 567.2,217.1 567.2,215.5 567.2,225.0 567.2,245.6 567.2,234.6 567.2,228.6 567.3,236.9 567.3,241.7 567.3,230.3 567.3,233.8 567.3,242.4 567.3,229.0 567.4,226.3 567.4,245.6 567.4,229.8 567.4,232.2 567.4,229.1 567.4,226.3 567.5,240.4 567.5,225.4 567.5,237.2 567.5,226.2 567.5,232.5 567.6,219.9 567.6,214.9 567.6,218.5 567.6,235.1 567.6,220.0 567.6,225.5 567.7,229.4 567.7,223.1 567.7,235.6 567.7,220.8 567.7,220.2 567.7,223.5 567.8,239.2 567.8,239.9 567.8,241.3 567.8,240.0 567.8,242.2 567.8,231.4 567.9,234.1 567.9,232.0 567.9,224.0 567.9,218.7 567.9,215.5 567.9,220.4 568.0,232.9 568.0,224.7 568.0,215.9 568.0,221.8 568.0,234.4 568.0,227.1 568.1,231.2 568.1,232.8 568.1,218.5 568.1,215.6 568.1,222.3 568.1,224.2 568.2,227.3 568.2,222.9 568.2,220.5 568.2,218.8 568.2,224.4 568.2,241.3 568.3,237.5 568.3,233.8 568.3,218.1 568.3,214.2 568.3,214.5 568.3,215.6 568.4,227.1 568.4,229.0 568.4,221.7 568.4,226.3 568.4,233.9 568.4,229.9 568.5,228.0 568.5,231.1 568.5,232.8 568.5,231.0 568.5,226.5 568.5,222.4 568.6,223.7 568.6,224.7 568.6,227.0 568.6,224.1 568.6,245.6 568.6,222.3 568.7,221.1 568.7,223.2 568.7,222.7 568.7,226.8 568.7,220.8 568.7,218.4 568.8,221.4 568.8,229.7 568.8,227.5 568.8,241.2 568.8,222.4 568.8,224.5 568.9,227.4 568.9,229.4 568.9,215.7 568.9,215.8 568.9,225.6 568.9,223.0 569.0,228.5 569.0,228.5 569.0,237.8 569.0,224.7 569.0,232.5 569.0,226.7 569.1,222.9 569.1,230.0 569.1,228.8 569.1,218.6 569.1,219.3 569.1,226.7 569.2,221.1 569.2,230.7 569.2,224.7 569.2,245.6 569.2,228.9 569.2,221.0 569.3,217.0 569.3,231.5 569.3,231.5 569.3,232.5 569.3,229.7 569.3,224.8 569.4,229.4 569.4,225.8 569.4,226.7 569.4,235.9 569.4,245.6 569.4,236.9 569.4,224.1 569.5,219.3 569.5,218.5 569.5,221.8 569.5,221.1 569.5,216.5 569.5,217.3 569.6,221.6 569.6,234.7 569.6,241.0 569.6,222.5 569.6,219.7 569.6,220.0 569.7,222.6 569.7,238.3 569.7,227.1 569.7,222.4 569.7,225.2 569.7,240.2 569.8,223.0 569.8,222.6 569.8,236.4 569.8,217.6 569.8,221.3 569.8,233.5 569.9,237.8 569.9,223.8 569.9,228.1 569.9,238.2 569.9,225.1 569.9,222.5 569.9,225.5 570.0,226.2 570.0,237.0 570.0,238.6 570.0,228.8 570.0,231.1 570.0,234.4 570.1,225.6 570.1,224.2 570.1,224.6 570.1,231.4 570.1,236.9 570.1,228.3 570.2,226.8 570.2,231.0 570.2,234.2 570.2,234.4 570.2,245.6 570.2,231.7 570.3,241.9 570.3,238.1 570.3,225.1 570.3,216.2 570.3,218.9 570.3,238.0 570.3,236.6 570.4,218.9 570.4,221.2 570.4,233.8 570.4,233.9 570.4,237.5 570.4,228.1 570.5,235.7 570.5,245.6 570.5,222.8 570.5,218.1 570.5,222.3 570.5,230.1 570.6,235.1 570.6,228.5 570.6,223.4 570.6,223.8 570.6,226.6 570.6,228.6 570.6,226.1 570.7,218.6 570.7,215.6 570.7,219.2 570.7,223.1 570.7,226.3 570.7,229.4 570.8,225.8 570.8,218.1 570.8,220.9 570.8,231.2 570.8,224.3 570.8,223.6 570.9,220.1 570.9,224.4 570.9,219.8 570.9,223.2 570.9,228.6 570.9,236.2 570.9,245.6 571.0,226.0 571.0,223.8 571.0,229.3 571.0,225.6 571.0,224.5 571.0,227.8 571.1,227.9 571.1,219.4 571.1,223.0 571.1,245.6 571.1,229.6 571.1,216.6 571.1,215.0 571.2,218.1 571.2,231.0 571.2,234.4 571.2,230.0 571.2,222.0 571.2,215.2 571.3,218.5 571.3,239.9 571.3,236.3 571.3,225.7 571.3,222.6 571.3,231.8 571.4,238.3 571.4,241.7 571.4,245.6 571.4,224.1 571.4,225.2 571.4,228.7 571.4,216.6 571.5,214.7 571.5,218.5 571.5,217.2 571.5,220.0 571.5,227.6 571.5,238.4 571.6,230.6 571.6,226.4 571.6,224.0 571.6,217.2 571.6,215.9 571.6,222.6 571.6,224.8 571.7,229.0 571.7,228.8 571.7,234.6 571.7,233.0 571.7,245.6 571.7,245.6 571.8,229.3 571.8,245.6 571.8,231.3 571.8,229.3 571.8,228.8 571.8,219.5 571.8,216.3 571.9,215.1 571.9,217.7 571.9,232.5 571.9,245.6 571.9,233.9 571.9,218.7 571.9,219.3 572.0,229.4 572.0,220.1 572.0,233.7 572.0,236.1 572.0,227.0 572.0,228.8 572.1,224.7 572.1,229.4 572.1,227.9 572.1,221.6 572.1,245.6 572.1,219.9 572.1,222.1 572.2,225.8 572.2,229.2 572.2,239.7 572.2,236.5 572.2,232.2 572.2,233.7 572.3,229.8 572.3,233.9 572.3,237.0 572.3,237.1 572.3,245.6 572.3,224.0 572.3,219.3 572.4,234.3 572.4,226.6 572.4,226.5 572.4,224.6 572.4,240.2 572.4,226.9 572.4,224.1 572.5,237.0 572.5,227.0 572.5,221.6 572.5,223.3 572.5,228.5 572.5,234.2 572.6,231.0 572.6,230.5 572.6,217.8 572.6,216.4 572.6,228.7 572.6,235.0 572.6,232.9 572.7,229.6 572.7,223.6 572.7,217.4 572.7,215.2 572.7,222.9 572.7,245.6 572.7,226.0 572.8,227.1 572.8,224.7 572.8,215.0 572.8,216.7 572.8,231.2 572.8,228.8 572.9,224.5 572.9,235.8 572.9,234.3 572.9,227.0 572.9,230.4 572.9,231.3 572.9,226.1 573.0,238.5 573.0,245.6 573.0,224.9 573.0,222.9 573.0,243.9 573.0,221.7 573.0,226.2 573.1,227.2 573.1,221.9 573.1,229.3 573.1,234.3 573.1,231.5 573.1,240.5 573.1,233.1 573.2,227.0 573.2,241.1 573.2,225.5 573.2,228.0 573.2,224.4 573.2,217.7 573.3,236.8 573.3,218.4 573.3,219.6 573.3,218.7 573.3,220.0 573.3,225.0 573.3,226.4 573.4,221.8 573.4,221.7 573.4,229.8 573.4,237.7 573.4,221.2 573.4,218.2 573.4,227.2 573.5,235.1 573.5,233.7 573.5,245.6 573.5,225.3 573.5,245.6 573.5,219.1 573.5,222.9 573.6,226.9 573.6,221.9 573.6,219.4 573.6,219.5 573.6,221.6 573.6,226.3 573.6,227.8 573.7,231.3 573.7,221.7 573.7,220.9 573.7,231.9 573.7,242.5 573.7,228.3 573.8,236.2 573.8,231.1 573.8,238.8 573.8,230.9 573.8,220.6 573.8,222.8 573.8,223.4 573.9,216.7 573.9,218.9 573.9,226.2 573.9,224.5 573.9,226.0 573.9,233.4 573.9,224.7 574.0,226.4 574.0,225.7 574.0,217.1 574.0,234.4 574.0,226.9 574.0,238.1 574.0,240.0 574.1,220.7 574.1,219.5 574.1,220.8 574.1,222.5 574.1,231.7 574.1,215.9 574.1,215.3 574.2,224.9 574.2,222.8 574.2,223.0 574.2,221.4 574.2,226.1 574.2,237.4 574.2,224.2 574.3,215.1 574.3,218.2 574.3,228.6 574.3,223.0 574.3,217.7 574.3,217.8 574.3,219.7 574.4,217.0 574.4,239.7 574.4,245.6 574.4,222.4 574.4,228.1 574.4,228.7 574.4,220.4 574.5,226.9 574.5,245.6 574.5,226.8 574.5,222.0 574.5,229.4 574.5,241.9 574.5,220.4 574.6,218.6 574.6,223.6 574.6,220.5 574.6,224.9 574.6,240.8 574.6,224.5 574.6,223.7 574.7,230.2 574.7,231.9 574.7,218.7 574.7,218.2 574.7,245.6 574.7,225.4 574.7,229.6 574.8,224.7 574.8,216.8 574.8,219.1 574.8,226.5 574.8,236.0 574.8,245.6 574.8,225.0 574.9,226.1 574.9,221.0 574.9,215.1 574.9,216.7 574.9,231.4 574.9,231.5 574.9,229.5 575.0,229.0 575.0,240.7 575.0,237.9 575.0,245.6 575.0,224.2 575.0,225.1 575.0,225.1 575.1,218.1 575.1,217.8 575.1,222.4 575.1,225.3 575.1,232.0 575.1,218.8 575.1,214.1 575.1,221.0 575.2,245.6 575.2,235.6 575.2,237.4 575.2,239.4 575.2,232.7 575.2,228.4 575.2,231.0 575.3,235.1 575.3,245.6 575.3,233.1 575.3,237.5 575.3,232.3 575.3,245.6 575.3,230.8 575.4,234.1 575.4,234.4 575.4,245.6 575.4,244.2 575.4,224.4 575.4,224.2 575.4,228.3 575.5,244.0 575.5,226.5 575.5,239.0 575.5,234.6 575.5,226.5 575.5,228.7 575.5,239.3 575.6,245.6 575.6,222.9 575.6,215.5 575.6,219.9 575.6,232.9 575.6,232.4 575.6,222.5 575.7,223.8 575.7,245.6 575.7,245.2 575.7,233.3 575.7,222.9 575.7,221.4 575.7,223.5 575.7,230.0 575.8,221.4 575.8,234.2 575.8,225.9 575.8,231.3 575.8,229.4 575.8,238.6 575.8,219.4 575.9,215.5 575.9,223.8 575.9,245.3 575.9,222.7 575.9,221.9 575.9,230.3 575.9,225.0 576.0,221.4 576.0,226.6 576.0,237.7 576.0,234.1 576.0,227.5 576.0,220.6 576.0,217.4 576.1,221.0 576.1,218.5 576.1,219.6 576.1,230.4 576.1,236.2 576.1,238.0 576.1,230.6 576.1,232.7 576.2,245.4 576.2,232.9 576.2,226.7 576.2,217.3 576.2,233.4 576.2,232.2 576.2,227.5 576.3,225.8 576.3,226.4 576.3,245.6 576.3,230.5 576.3,215.4 576.3,216.1 576.3,220.2 576.4,226.4 576.4,233.5 576.4,237.0 576.4,222.5 576.4,220.7 576.4,221.5 576.4,222.3 576.4,241.3 576.5,234.2 576.5,224.2 576.5,232.4 576.5,229.7 576.5,224.2 576.5,221.0 576.5,222.8 576.6,215.8 576.6,219.0 576.6,224.3 576.6,232.6 576.6,232.0 576.6,231.9 576.6,234.5 576.6,234.2 576.7,229.3 576.7,223.6 576.7,229.2 576.7,245.6 576.7,227.5 576.7,223.7 576.7,232.0 576.8,240.7 576.8,231.8 576.8,218.9 576.8,220.1 576.8,225.4 576.8,226.1 576.8,216.7 576.9,220.7 576.9,220.8 576.9,222.9 576.9,215.3 576.9,214.8 576.9,225.9 576.9,224.6 576.9,221.9 577.0,232.0 577.0,245.6 577.0,224.8 577.0,218.3 577.0,227.7 577.0,235.7 577.0,231.5 577.1,222.8 577.1,231.8 577.1,224.6 577.1,229.4 577.1,225.7 577.1,227.2 577.1,227.2 577.1,227.0 577.2,221.2 577.2,216.3 577.2,214.1 577.2,218.0 577.2,225.7 577.2,223.4 577.2,237.5 577.3,229.7 577.3,221.4 577.3,221.8 577.3,227.2 577.3,220.2 577.3,232.8 577.3,218.4 577.3,218.6 577.4,225.8 577.4,234.4 577.4,237.7 577.4,233.4 577.4,222.9 577.4,234.8 577.4,233.7 577.5,245.6 577.5,227.4 577.5,228.6 577.5,235.8 577.5,225.7 577.5,223.2 577.5,221.5 577.5,223.1 577.6,233.6 577.6,223.0 577.6,225.8 577.6,221.0 577.6,224.6 577.6,245.6 577.6,230.4 577.6,222.1 577.7,220.4 577.7,218.9 577.7,223.8 577.7,232.7 577.7,235.2 577.7,243.8 577.7,239.0 577.8,231.3 577.8,231.2 577.8,234.6 577.8,237.2 577.8,234.1 577.8,229.1 577.8,220.8 577.8,231.5 577.9,222.3 577.9,231.9 577.9,232.2 577.9,222.1 577.9,244.0 577.9,218.8 577.9,215.8 578.0,219.9 578.0,227.9 578.0,230.2 578.0,224.7 578.0,221.7 578.0,219.7 578.0,222.4 578.0,218.6 578.1,219.7 578.1,224.9 578.1,236.2 578.1,241.0 578.1,220.6 578.1,216.1 578.1,227.2 578.1,230.8 578.2,229.7 578.2,228.3 578.2,245.6 578.2,229.1 578.2,226.7 578.2,226.9 578.2,245.6 578.2,227.3 578.3,221.6 578.3,226.1 578.3,245.5 578.3,245.5 578.3,229.6 578.3,227.9 578.3,227.3 578.4,230.8 578.4,227.2 578.4,216.1 578.4,218.8 578.4,237.2 578.4,228.9 578.4,237.5 578.4,232.9 578.5,234.3 578.5,228.2 578.5,222.3 578.5,222.9 578.5,221.9 578.5,218.2 578.5,216.5 578.5,215.6 578.6,215.6 578.6,218.4 578.6,219.8 578.6,224.1 578.6,228.5 578.6,225.0 578.6,222.1 578.6,235.0 578.7,225.1 578.7,214.7 578.7,218.9 578.7,229.2 578.7,237.4 578.7,225.0 578.7,224.6 578.8,223.0 578.8,230.0 578.8,226.0 578.8,221.2 578.8,226.7 578.8,236.1 578.8,231.0 578.8,231.2 578.9,245.6 578.9,231.2 578.9,223.5 578.9,224.6 578.9,221.1 578.9,221.8 578.9,217.2 578.9,214.4 579.0,218.9 579.0,223.1 579.0,216.7 579.0,217.5 579.0,229.4 579.0,232.7 579.0,221.0 579.0,220.2 579.1,227.7 579.1,238.5 579.1,242.1 579.1,228.4 579.1,229.5 579.1,245.6 579.1,227.8 579.1,217.9 579.2,214.9 579.2,216.3 579.2,224.6 579.2,239.6 579.2,229.5 579.2,236.4 579.2,237.3 579.2,241.6 579.3,224.3 579.3,228.1 579.3,220.3 579.3,231.4 579.3,229.4 579.3,238.3 579.3,245.6 579.3,222.5 579.4,218.3 579.4,223.7 579.4,228.7 579.4,226.3 579.4,221.5 579.4,224.5 579.4,225.3 579.4,226.3 579.5,222.2 579.5,221.3 579.5,216.1 579.5,221.5 579.5,224.7 579.5,230.0 579.5,245.6 579.5,245.2 579.6,230.9 579.6,239.7 579.6,236.4 579.6,237.3 579.6,242.8 579.6,227.9 579.6,221.8 579.6,233.1 579.7,223.0 579.7,217.5 579.7,219.3 579.7,224.0 579.7,223.3 579.7,229.3 579.7,231.6 579.7,224.9 579.8,220.8 579.8,229.4 579.8,224.0 579.8,232.0 579.8,233.9 579.8,224.4 579.8,220.4 579.8,224.3 579.9,225.8 579.9,229.7 579.9,225.3 579.9,221.3 579.9,222.0 579.9,221.7 579.9,245.6 579.9,226.9 580.0,223.1 580.0,218.2 580.0,215.2 580.0,217.5 580.0,227.0 580.0,231.9 580.0,225.0 580.0,235.3 580.1,222.7 580.1,222.7 580.1,232.4 580.1,245.6 580.1,234.2 580.1,220.5 580.1,217.9 580.1,225.0 580.2,224.7 580.2,232.8 580.2,230.0 580.2,221.0 580.2,215.0 580.2,217.2 580.2,245.6 580.2,245.6 580.3,226.5 580.3,224.4 580.3,229.5 580.3,236.1 580.3,224.0 580.3,226.1 580.3,245.6 580.3,232.6 580.4,227.6 580.4,220.9 580.4,220.9 580.4,230.4 580.4,239.9 580.4,218.1 580.4,215.2 580.4,215.4 580.5,216.0 580.5,217.5 580.5,218.4 580.5,218.3 580.5,223.1 580.5,226.0 580.5,220.0 580.5,217.7 580.5,217.0 580.6,214.7 580.6,218.0 580.6,226.5 580.6,226.2 580.6,222.5 580.6,230.9 580.6,233.7 580.6,231.0 580.7,229.5 580.7,221.7 580.7,217.2 580.7,221.7 580.7,221.0 580.7,215.3 580.7,223.1 580.7,238.3 580.8,240.7 580.8,235.6 580.8,227.9 580.8,226.9 580.8,234.2 580.8,237.7 580.8,233.5 580.8,231.5 580.9,237.0 580.9,237.8 580.9,228.3 580.9,224.1 580.9,226.6 580.9,234.4 580.9,231.0 580.9,227.0 581.0,232.3 581.0,227.8 581.0,219.2 581.0,240.2 581.0,232.7 581.0,230.9 581.0,217.2 581.0,215.2 581.0,219.9 581.1,222.2 581.1,221.5 581.1,220.3 581.1,223.6 581.1,236.4 581.1,235.1 581.1,224.7 581.1,224.0 581.2,223.2 581.2,220.4 581.2,222.1 581.2,227.7 581.2,238.4 581.2,241.6 581.2,239.6 581.2,228.9 581.3,220.7 581.3,219.6 581.3,221.7 581.3,225.9 581.3,236.8 581.3,232.9 581.3,236.0 581.3,226.8 581.3,220.1 581.4,214.9 581.4,215.1 581.4,223.5 581.4,233.4 581.4,222.2 581.4,215.5 581.4,222.9 581.4,235.6 581.5,233.1 581.5,220.5 581.5,217.1 581.5,222.5 581.5,221.2 581.5,219.5 581.5,221.3 581.5,221.1 581.5,225.8 581.6,230.1 581.6,235.3 581.6,245.2 581.6,245.6 581.6,224.7 581.6,218.6 581.6,231.4 581.6,225.3 581.7,231.6 581.7,226.6 581.7,230.8 581.7,241.4 581.7,225.3 581.7,220.7 581.7,226.1 581.7,222.5 581.8,228.6 581.8,221.3 581.8,225.2 581.8,228.6 581.8,245.6 581.8,230.7 581.8,222.1 581.8,226.2 581.8,222.4 581.9,225.4 581.9,245.6 581.9,240.0 581.9,234.3 581.9,228.8 581.9,221.8 581.9,230.4 581.9,236.6 582.0,219.8 582.0,215.0 582.0,220.3 582.0,228.8 582.0,220.6 582.0,243.5 582.0,227.6 582.0,245.6 582.0,233.0 582.1,227.4 582.1,226.3 582.1,231.7 582.1,234.2 582.1,222.3 582.1,216.1 582.1,215.1 582.1,223.3 582.2,231.8 582.2,237.9 582.2,230.7 582.2,220.9 582.2,221.9 582.2,221.7 582.2,223.8 582.2,230.0 582.2,232.6 582.3,237.7 582.3,228.7 582.3,237.6 582.3,220.3 582.3,220.2 582.3,227.2 582.3,222.8 582.3,223.7 582.4,216.4 582.4,216.9 582.4,222.0 582.4,228.6 582.4,233.3 582.4,240.7 582.4,221.5 582.4,215.6 582.4,215.5 582.5,218.5 582.5,227.8 582.5,220.0 582.5,222.8 582.5,224.9 582.5,225.1 582.5,232.8 582.5,220.8 582.5,221.4 582.6,227.9 582.6,232.5 582.6,224.7 582.6,221.9 582.6,233.2 582.6,224.9 582.6,230.9 582.6,217.7 582.7,224.2 582.7,229.3 582.7,219.3 582.7,226.8 582.7,239.3 582.7,237.9 582.7,245.6 582.7,237.9 582.7,245.6 582.8,245.6 582.8,245.6 582.8,229.6 582.8,233.6 582.8,225.0 582.8,225.7 582.8,238.3 582.8,228.4 582.8,245.6 582.9,216.5 582.9,214.4 582.9,220.6 582.9,234.6 582.9,221.0 582.9,216.0 582.9,220.8 582.9,226.9 583.0,236.8 583.0,225.7 583.0,228.6 583.0,228.5 583.0,228.2 583.0,233.6 583.0,223.2 583.0,225.4 583.0,245.6 583.1,227.3 583.1,218.6 583.1,224.7 583.1,224.1 583.1,220.6 583.1,230.5 583.1,218.5 583.1,219.3 583.1,226.0 583.2,221.8 583.2,223.9 583.2,225.8 583.2,216.6 583.2,217.0 583.2,226.8 583.2,243.8 583.2,231.9 583.2,242.2 583.3,220.2 583.3,214.2 583.3,218.5 583.3,225.1 583.3,227.9 583.3,228.4 583.3,224.3 583.3,227.4 583.4,217.8 583.4,214.4 583.4,215.6 583.4,232.8 583.4,226.4 583.4,222.7 583.4,227.5 583.4,231.7 583.4,224.1 583.5,226.2 583.5,238.6 583.5,230.3 583.5,219.3 583.5,219.0 583.5,218.9 583.5,217.3 583.5,220.7 583.5,227.5 583.6,228.3 583.6,235.3 583.6,229.5 583.6,238.1 583.6,226.1 583.6,226.8 583.6,222.3 583.6,226.0 583.6,226.3 583.7,218.1 583.7,221.0 583.7,230.6 583.7,245.6 583.7,225.9 583.7,223.7 583.7,232.3 583.7,224.5 583.7,221.9 583.8,234.8 583.8,224.1 583.8,225.1 583.8,226.6 583.8,223.8 583.8,224.1 583.8,231.4 583.8,228.1 583.8,225.2 583.9,241.2 583.9,224.5 583.9,232.0 583.9,228.2 583.9,233.5 583.9,220.1 583.9,228.1 583.9,216.6 583.9,216.2 584.0,222.9 584.0,224.3 584.0,231.5 584.0,227.3 584.0,236.4 584.0,231.4 584.0,245.6 584.0,243.0 584.0,231.0 584.1,233.7 584.1,218.3 584.1,218.9 584.1,224.7 584.1,220.0 584.1,218.6 584.1,234.2 584.1,223.7 584.1,221.4 584.2,231.0 584.2,239.6 584.2,233.2 584.2,228.5 584.2,227.7 584.2,231.6 584.2,242.6 584.2,226.6 584.2,234.7 584.3,245.6 584.3,230.4 584.3,221.3 584.3,221.4 584.3,236.3 584.3,228.0 584.3,225.2 584.3,222.5 584.3,220.2 584.4,228.2 584.4,235.8 584.4,245.6 584.4,243.3 584.4,233.6 584.4,222.0 584.4,218.7 584.4,216.7 584.4,220.6 584.5,227.1 584.5,230.4 584.5,238.2 584.5,231.3 584.5,221.9 584.5,223.2 584.5,216.6 584.5,222.7 584.5,232.5 584.6,223.4 584.6,224.5 584.6,231.6 584.6,217.5 584.6,225.7 584.6,221.7 584.6,218.4 584.6,223.0 584.6,219.6 584.7,227.7 584.7,231.3 584.7,230.5 584.7,226.8 584.7,245.6 584.7,223.0 584.7,218.8 584.7,218.9 584.7,223.1 584.8,223.4 584.8,217.1 584.8,220.2 584.8,245.6 584.8,241.5 584.8,230.3 584.8,227.1 584.8,226.8 584.8,217.3 584.9,221.6 584.9,227.1 584.9,235.2 584.9,219.5 584.9,216.3 584.9,222.5 584.9,226.1 584.9,220.3 584.9,225.9 585.0,226.2 585.0,220.1 585.0,224.3 585.0,234.9 585.0,234.7 585.0,233.2 585.0,239.0 585.0,218.9 585.0,220.4 585.1,229.5 585.1,220.1 585.1,217.9 585.1,221.4 585.1,227.4 585.1,238.7 585.1,243.7 585.1,235.7 585.1,221.9 585.1,221.5 585.2,228.5 585.2,231.7 585.2,234.3 585.2,229.9 585.2,225.4 585.2,240.7 585.2,222.6 585.2,225.5 585.2,224.4 585.3,223.7 585.3,222.6 585.3,230.4 585.3,220.5 585.3,228.4 585.3,245.6 585.3,231.4 585.3,223.7 585.3,223.8 585.4,222.3 585.4,229.7 585.4,234.5 585.4,235.7 585.4,225.7 585.4,220.3 585.4,230.2 585.4,231.0 585.4,227.1 585.5,224.4 585.5,225.4 585.5,241.7 585.5,221.2 585.5,218.4 585.5,220.3 585.5,220.7 585.5,215.5 585.5,215.5 585.5,226.0 585.6,229.0 585.6,227.4 585.6,230.8 585.6,234.5 585.6,223.0 585.6,215.8 585.6,217.4 585.6,214.9 585.6,215.1 585.7,215.2 585.7,215.5 585.7,228.2 585.7,236.1 585.7,240.9 585.7,233.8 585.7,243.9 585.7,228.8 585.7,235.9 585.8,232.6 585.8,221.5 585.8,225.0 585.8,227.9 585.8,224.5 585.8,229.4 585.8,232.3 585.8,217.6 585.8,216.1 585.8,228.0 585.9,237.4 585.9,228.1 585.9,218.5 585.9,218.9 585.9,222.1 585.9,223.6 585.9,231.3 585.9,232.5 585.9,234.3 586.0,225.5 586.0,224.7 586.0,219.2 586.0,215.6 586.0,222.1 586.0,235.6 586.0,222.1 586.0,223.0 586.0,238.5 586.0,230.7 586.1,220.0 586.1,216.3 586.1,221.6 586.1,241.9 586.1,236.0 586.1,223.5 586.1,227.3 586.1,237.5 586.1,234.4 586.2,236.7 586.2,222.2 586.2,229.0 586.2,226.5 586.2,230.6 586.2,235.3 586.2,233.5 586.2,228.2 586.2,226.1 586.2,222.1 586.3,226.6 586.3,227.4 586.3,221.7 586.3,229.9 586.3,227.3 586.3,245.6 586.3,227.2 586.3,220.3 586.3,215.7 586.4,217.3 586.4,223.6 586.4,238.1 586.4,236.5 586.4,238.9 586.4,222.9 586.4,218.5 586.4,217.8 586.4,218.9 586.4,222.9 586.5,219.7 586.5,220.3 586.5,222.4 586.5,215.6 586.5,215.3 586.5,217.8 586.5,220.4 586.5,221.9 586.5,216.8 586.6,218.1 586.6,227.8 586.6,227.7 586.6,220.3 586.6,239.9 586.6,220.8 586.6,221.0 586.6,226.2 586.6,220.7 586.6,221.1 586.7,245.6 586.7,222.6 586.7,227.5 586.7,244.3 586.7,238.0 586.7,223.5 586.7,224.1 586.7,223.0 586.7,220.2 586.8,224.2 586.8,245.6 586.8,237.3 586.8,222.7 586.8,217.0 586.8,224.2 586.8,223.1 586.8,221.1 586.8,245.6 586.8,243.2 586.9,226.6 586.9,232.6 586.9,232.3 586.9,228.6 586.9,228.0 586.9,245.6 586.9,229.1 586.9,231.0 586.9,224.2 586.9,222.1 587.0,230.0 587.0,231.7 587.0,228.0 587.0,218.2 587.0,219.8 587.0,227.0 587.0,231.9 587.0,233.8 587.0,245.6 587.1,232.1 587.1,232.5 587.1,236.5 587.1,231.2 587.1,228.8 587.1,223.3 587.1,226.0 587.1,228.7 587.1,234.4 587.1,235.2 587.2,236.7 587.2,225.7 587.2,232.5 587.2,231.4 587.2,222.7 587.2,221.5 587.2,228.2 587.2,230.6 587.2,227.7 587.2,232.4 587.3,224.1 587.3,224.2 587.3,216.9 587.3,240.4 587.3,219.2 587.3,219.2 587.3,232.2 587.3,237.7 587.3,232.4 587.4,224.4 587.4,229.1 587.4,242.8 587.4,229.3 587.4,223.0 587.4,222.2 587.4,229.3 587.4,229.7 587.4,228.6 587.4,229.1 587.5,240.4 587.5,228.4 587.5,224.1 587.5,225.5 587.5,233.5 587.5,227.2 587.5,233.9 587.5,225.2 587.5,228.2 587.5,245.6 587.6,235.7 587.6,228.5 587.6,230.1 587.6,236.3 587.6,242.9 587.6,221.4 587.6,215.6 587.6,220.8 587.6,224.4 587.6,232.4 587.7,235.3 587.7,235.4 587.7,230.9 587.7,225.1 587.7,233.7 587.7,227.6 587.7,233.6 587.7,225.8 587.7,229.9 587.7,234.7 587.8,234.0 587.8,225.4 587.8,222.0 587.8,218.5 587.8,223.8 587.8,215.9 587.8,220.1 587.8,219.9 587.8,222.7 587.8,234.0 587.9,227.9 587.9,221.9 587.9,236.7 587.9,227.4 587.9,224.1 587.9,219.2 587.9,228.7 587.9,245.6 587.9,221.8 588.0,220.8 588.0,221.2 588.0,224.0 588.0,226.5 588.0,236.0 588.0,230.9 588.0,223.0 588.0,217.7 588.0,224.2 588.0,237.3 588.1,228.3 588.1,227.5 588.1,220.5 588.1,233.4 588.1,245.2 588.1,230.4 588.1,222.2 588.1,223.5 588.1,224.3 588.1,224.7 588.2,231.2 588.2,236.9 588.2,223.5 588.2,218.8 588.2,234.1 588.2,223.1 588.2,225.7 588.2,245.6 588.2,229.7 588.2,230.8 588.3,221.8 588.3,229.0 588.3,220.0 588.3,221.7 588.3,232.2 588.3,235.0 588.3,234.3 588.3,225.8 588.3,218.9 588.3,225.7 588.4,231.4 588.4,219.9 588.4,218.5 588.4,245.6 588.4,221.2 588.4,214.5 588.4,214.2 588.4,215.1 588.4,241.1 588.4,215.4 588.5,215.3 588.5,228.2 588.5,221.8 588.5,220.2 588.5,224.4 588.5,231.0 588.5,226.0 588.5,225.0 588.5,225.7 588.5,232.9 588.6,219.7 588.6,245.6 588.6,222.6 588.6,223.7 588.6,231.4 588.6,232.3 588.6,234.2 588.6,220.1 588.6,216.6 588.6,217.0 588.7,223.4 588.7,239.6 588.7,222.7 588.7,220.5 588.7,234.7 588.7,230.3 588.7,222.9 588.7,215.4 588.7,216.3 588.7,221.6 588.7,225.0 588.8,225.8 588.8,226.4 588.8,241.6 588.8,233.8 588.8,222.2 588.8,221.6 588.8,232.3 588.8,223.5 588.8,224.2 588.8,245.6 588.9,234.4 588.9,233.0 588.9,221.9 588.9,221.9 588.9,242.3 588.9,245.6 588.9,228.8 588.9,224.8 588.9,245.6 588.9,219.7 589.0,215.1 589.0,216.8 589.0,220.8 589.0,219.5 589.0,220.2 589.0,216.7 589.0,222.0 589.0,240.5 589.0,237.3 589.0,228.7 589.1,226.1 589.1,226.4 589.1,223.5 589.1,217.2 589.1,216.4 589.1,219.7 589.1,225.0 589.1,226.7 589.1,222.1 589.1,221.0 589.2,220.3 589.2,226.8 589.2,232.2 589.2,232.1 589.2,222.6 589.2,221.9 589.2,245.6 589.2,222.3 589.2,219.7 589.2,227.5 589.2,234.9 589.3,230.8 589.3,228.6 589.3,226.5 589.3,231.7 589.3,227.1 589.3,228.6 589.3,239.2 589.3,239.1 589.3,225.4 589.3,219.7 589.4,226.0 589.4,222.2 589.4,222.4 589.4,223.1 589.4,230.3 589.4,219.5 589.4,214.8 589.4,218.2 589.4,222.8 589.4,226.7 589.5,219.5 589.5,217.9 589.5,224.7 589.5,220.0 589.5,221.1 589.5,219.2 589.5,225.7 589.5,226.6 589.5,222.4 589.5,219.0 589.6,217.3 589.6,225.2 589.6,225.9 589.6,217.0 589.6,222.9 589.6,245.6 589.6,238.2 589.6,224.6 589.6,220.9 589.6,231.5 589.6,228.6 589.7,226.1 589.7,243.1 589.7,222.4 589.7,219.1 589.7,225.4 589.7,226.9 589.7,232.5 589.7,226.1 589.7,222.7 589.7,224.4 589.8,229.0 589.8,235.2 589.8,230.5 589.8,229.4 589.8,227.1 589.8,228.0 589.8,222.5 589.8,220.5 589.8,229.8 589.8,234.7 589.8,234.9 589.9,226.1 589.9,217.3 589.9,218.8 589.9,224.9 589.9,226.3 589.9,223.0 589.9,223.9 589.9,229.3 589.9,234.3 589.9,232.3 590.0,223.8 590.0,220.4 590.0,226.0 590.0,243.7 590.0,241.0 590.0,225.5 590.0,226.2 590.0,225.8 590.0,219.0 590.0,227.9 590.1,230.7 590.1,223.2 590.1,227.7 590.1,231.3 590.1,230.9 590.1,240.6 590.1,235.9 590.1,220.5 590.1,222.1 590.1,223.9 590.1,224.5 590.2,227.8 590.2,242.5 590.2,234.8 590.2,221.1 590.2,227.3 590.2,228.6 590.2,239.4 590.2,232.0 590.2,241.5 590.2,236.8 590.3,241.6 590.3,242.7 590.3,231.5 590.3,227.9 590.3,227.6 590.3,234.7 590.3,227.0 590.3,223.0 590.3,223.5 590.3,221.9 590.3,219.2 590.4,218.7 590.4,236.8 590.4,225.3 590.4,228.3 590.4,225.2 590.4,225.2 590.4,226.2 590.4,220.5 590.4,220.7 590.4,230.3 590.5,234.7 590.5,235.5 590.5,220.5 590.5,215.4 590.5,222.2 590.5,233.6 590.5,234.4 590.5,238.8 590.5,243.5 590.5,225.3 590.5,223.1 590.6,232.5 590.6,229.4 590.6,245.6 590.6,223.3 590.6,225.2 590.6,230.2 590.6,223.7 590.6,223.8 590.6,224.5 590.6,225.5 590.6,227.3 590.7,239.3 590.7,228.1 590.7,221.7 590.7,231.3 590.7,245.5 590.7,234.6 590.7,231.8 590.7,244.0 590.7,234.3 590.7,225.4 590.8,224.2 590.8,221.9 590.8,226.0 590.8,229.9 590.8,221.4 590.8,220.5 590.8,226.1 590.8,222.4 590.8,235.3 590.8,223.1 590.8,215.1 590.9,218.5 590.9,225.0 590.9,223.0 590.9,226.1 590.9,240.9 590.9,240.4 590.9,225.6 590.9,227.4 590.9,245.6 590.9,231.7 590.9,233.9 591.0,245.6 591.0,220.0 591.0,220.5 591.0,229.1 591.0,221.5 591.0,223.9 591.0,235.8 591.0,244.4 591.0,238.6 591.0,237.4 591.1,224.4 591.1,222.1 591.1,245.6 591.1,226.2 591.1,219.6 591.1,230.8 591.1,239.1 591.1,230.5 591.1,232.2 591.1,245.6 591.1,233.8 591.2,239.8 591.2,221.7 591.2,221.7 591.2,223.3 591.2,225.3 591.2,228.3 591.2,227.0 591.2,237.1 591.2,231.1 591.2,231.3 591.2,230.8 591.3,232.0 591.3,219.2 591.3,217.8 591.3,226.3 591.3,223.2 591.3,215.4 591.3,215.2 591.3,224.2 591.3,239.9 591.3,220.1 591.3,218.4 591.4,233.3 591.4,228.6 591.4,236.8 591.4,235.2 591.4,239.1 591.4,240.0 591.4,232.2 591.4,226.5 591.4,229.9 591.4,226.3 591.4,234.7 591.5,226.4 591.5,220.4 591.5,223.7 591.5,224.4 591.5,220.2 591.5,237.4 591.5,233.0 591.5,230.6 591.5,225.6 591.5,220.8 591.6,221.6 591.6,229.2 591.6,241.3 591.6,227.7 591.6,225.8 591.6,227.7 591.6,226.9 591.6,223.0 591.6,230.1 591.6,231.9 591.6,228.0 591.7,238.9 591.7,234.9 591.7,245.6 591.7,230.5 591.7,237.0 591.7,219.8 591.7,215.5 591.7,220.0 591.7,220.0 591.7,230.4 591.7,222.7 591.8,219.9 591.8,223.3 591.8,227.4 591.8,233.9 591.8,225.2 591.8,223.2 591.8,228.9 591.8,236.4 591.8,225.7 591.8,227.0 591.8,231.1 591.9,229.0 591.9,230.4 591.9,230.0 591.9,217.9 591.9,214.6 591.9,218.4 591.9,238.4 591.9,224.0 591.9,222.6 591.9,226.6 591.9,225.9 592.0,226.8 592.0,226.5 592.0,225.7 592.0,220.8 592.0,230.0 592.0,226.7 592.0,223.6 592.0,221.5 592.0,222.3 592.0,238.0 592.0,232.4 592.1,235.2 592.1,229.5 592.1,222.4 592.1,219.3 592.1,219.5 592.1,230.5 592.1,224.1 592.1,217.8 592.1,227.6 592.1,238.2 592.1,228.0 592.2,227.4 592.2,232.4 592.2,221.0 592.2,223.0 592.2,223.5 592.2,245.6 592.2,229.8 592.2,237.4 592.2,223.7 592.2,227.1 592.2,232.1 592.3,235.5 592.3,227.6 592.3,220.0 592.3,217.6 592.3,219.9 592.3,224.8 592.3,223.4 592.3,224.7 592.3,222.9 592.3,218.6 592.3,217.9 592.4,217.4 592.4,226.1 592.4,221.6 592.4,236.8 592.4,245.6 592.4,222.5 592.4,217.0 592.4,226.9 592.4,231.9 592.4,231.4 592.4,223.6 592.5,217.0 592.5,224.2 592.5,232.2 592.5,226.9 592.5,227.6 592.5,227.2 592.5,227.8 592.5,235.0 592.5,223.6 592.5,220.0 592.5,223.4 592.5,222.4 592.6,231.7 592.6,245.6 592.6,226.7 592.6,222.3 592.6,219.8 592.6,215.6 592.6,217.2 592.6,223.1 592.6,225.8 592.6,220.9 592.6,220.3 592.7,227.6 592.7,235.4 592.7,230.5 592.7,226.3 592.7,224.0 592.7,223.5 592.7,217.7 592.7,223.8 592.7,226.6 592.7,226.0 592.7,227.6 592.8,231.8 592.8,231.6 592.8,231.5 592.8,244.3 592.8,245.6 592.8,227.7 592.8,226.4 592.8,226.4 592.8,231.5 592.8,224.0 592.8,221.5 592.9,224.0 592.9,218.2 592.9,222.8 592.9,229.4 592.9,226.6 592.9,227.3 592.9,221.3 592.9,219.8 592.9,237.5 592.9,231.1 592.9,226.7 593.0,231.5 593.0,234.4 593.0,224.8 593.0,223.3 593.0,228.2 593.0,227.8 593.0,224.5 593.0,219.7 593.0,223.4 593.0,226.6 593.0,245.4 593.0,233.1 593.1,221.6 593.1,215.9 593.1,223.1 593.1,245.6 593.1,240.1 593.1,232.7 593.1,219.9 593.1,218.5 593.1,224.8 593.1,219.0 593.1,217.5 593.2,217.6 593.2,215.3 593.2,219.8 593.2,227.2 593.2,235.6 593.2,228.7 593.2,222.1 593.2,221.4 593.2,218.5 593.2,219.1 593.2,227.6 593.3,227.8 593.3,225.4 593.3,226.2 593.3,231.6 593.3,245.6 593.3,228.7 593.3,216.0 593.3,219.9 593.3,223.3 593.3,237.9 593.3,215.4 593.3,216.4 593.4,223.7 593.4,227.3 593.4,220.6 593.4,227.0 593.4,231.1 593.4,220.2 593.4,221.4 593.4,226.8 593.4,218.8 593.4,222.3 593.4,231.4 593.5,228.4 593.5,231.0 593.5,227.6 593.5,222.7 593.5,224.9 593.5,233.8 593.5,229.4 593.5,224.6 593.5,220.4 593.5,221.9 593.5,230.7 593.5,229.7 593.6,229.5 593.6,227.1 593.6,231.1 593.6,219.2 593.6,220.6 593.6,223.0 593.6,217.0 593.6,222.9 593.6,231.5 593.6,222.8 593.6,223.4 593.7,221.0 593.7,229.2 593.7,220.9 593.7,222.4 593.7,230.3 593.7,227.2 593.7,220.6 593.7,215.5 593.7,214.7 593.7,220.7 593.7,234.0 593.7,221.0 593.8,221.9 593.8,219.5 593.8,226.9 593.8,241.0 593.8,224.2 593.8,215.0 593.8,216.5 593.8,232.8 593.8,245.6 593.8,239.1 593.8,245.6 593.9,224.6 593.9,219.6 593.9,226.1 593.9,231.0 593.9,227.6 593.9,218.5 593.9,222.6 593.9,225.9 593.9,234.1 593.9,232.3 593.9,225.8 593.9,220.5 594.0,219.7 594.0,226.9 594.0,224.7 594.0,225.6 594.0,232.2 594.0,221.2 594.0,217.3 594.0,221.3 594.0,219.6 594.0,219.5 594.0,218.6 594.1,234.0 594.1,220.5 594.1,236.8 594.1,245.6 594.1,227.5 594.1,217.7 594.1,218.6 594.1,229.9 594.1,241.3 594.1,226.0 594.1,225.5 594.1,222.2 594.2,216.9 594.2,243.5 594.2,225.8 594.2,224.3 594.2,221.4 594.2,222.1 594.2,236.8 594.2,229.2 594.2,230.0 594.2,226.1 594.2,228.1 594.2,225.6 594.3,228.0 594.3,226.2 594.3,234.5 594.3,222.8 594.3,217.0 594.3,217.3 594.3,219.3 594.3,217.3 594.3,216.6 594.3,226.7 594.3,228.4 594.4,221.1 594.4,222.6 594.4,218.8 594.4,228.7 594.4,221.5 594.4,224.2 594.4,218.5 594.4,214.3 594.4,215.3 594.4,230.5 594.4,230.2 594.4,220.7 594.5,223.1 594.5,220.3 594.5,215.0 594.5,231.7 594.5,219.6 594.5,224.4 594.5,221.1 594.5,219.8 594.5,222.2 594.5,239.1 594.5,223.0 594.5,220.8 594.6,236.6 594.6,229.6 594.6,220.6 594.6,226.6 594.6,232.6 594.6,223.1 594.6,224.9 594.6,221.1 594.6,219.7 594.6,224.3 594.6,237.7 594.7,220.2 594.7,236.3 594.7,216.6 594.7,225.4 594.7,220.5 594.7,219.4 594.7,239.5 594.7,240.2 594.7,242.7 594.7,228.3 594.7,245.6 594.7,234.1 594.8,228.0 594.8,221.5 594.8,217.6 594.8,217.8 594.8,217.7 594.8,218.8 594.8,231.2 594.8,230.8 594.8,223.6 594.8,229.8 594.8,231.1 594.8,235.2 594.9,221.9 594.9,226.4 594.9,222.8 594.9,221.7 594.9,230.8 594.9,225.5 594.9,245.1 594.9,219.8 594.9,228.1 594.9,220.0 594.9,219.2 594.9,220.5 595.0,227.4 595.0,245.6 595.0,236.8 595.0,223.4 595.0,230.3 595.0,245.6 595.0,239.3 595.0,245.6 595.0,222.0 595.0,221.4 595.0,225.6 595.0,229.7 595.1,231.7 595.1,222.9 595.1,236.5 595.1,229.8 595.1,227.3 595.1,219.9 595.1,231.9 595.1,229.7 595.1,226.2 595.1,228.4 595.1,223.1 595.1,216.8 595.2,219.4 595.2,220.7 595.2,220.7 595.2,219.6 595.2,239.1 595.2,238.7 595.2,231.0 595.2,242.1 595.2,232.4 595.2,225.6 595.2,222.9 595.2,228.3 595.3,229.3 595.3,238.0 595.3,237.7 595.3,226.1 595.3,220.3 595.3,221.3 595.3,222.2 595.3,217.9 595.3,229.3 595.3,234.9 595.3,245.6 595.3,233.3 595.4,221.3 595.4,217.9 595.4,219.6 595.4,218.3 595.4,221.5 595.4,227.3 595.4,222.6 595.4,231.5 595.4,230.1 595.4,221.1 595.4,227.4 595.4,231.9 595.5,239.9 595.5,227.7 595.5,240.4 595.5,223.9 595.5,230.6 595.5,235.8 595.5,231.0 595.5,219.5 595.5,236.3 595.5,227.0 595.5,235.0 595.5,242.3 595.6,242.2 595.6,226.8 595.6,227.0 595.6,229.3 595.6,239.5 595.6,228.3 595.6,228.4 595.6,228.8 595.6,224.1 595.6,227.2 595.6,222.0 595.6,214.8 595.7,217.5 595.7,233.4 595.7,227.1 595.7,244.0 595.7,223.4 595.7,225.7 595.7,238.2 595.7,228.2 595.7,227.3 595.7,235.6 595.7,220.4 595.7,214.8 595.8,218.7 595.8,223.9 595.8,228.7 595.8,236.2 595.8,232.7 595.8,225.4 595.8,224.7 595.8,235.0 595.8,236.4 595.8,233.1 595.8,237.1 595.8,223.2 595.9,231.4 595.9,231.8 595.9,236.4 595.9,235.6 595.9,232.2 595.9,225.4 595.9,225.2 595.9,230.7 595.9,230.8 595.9,231.7 595.9,217.5 595.9,223.9 596.0,221.7 596.0,234.8 596.0,245.6 596.0,245.6 596.0,231.7 596.0,222.1 596.0,218.3 596.0,216.8 596.0,216.0 596.0,219.9 596.0,225.0 596.0,226.9 596.1,221.3 596.1,228.2 596.1,230.2 596.1,229.7 596.1,227.0 596.1,234.6 596.1,219.2 596.1,217.5 596.1,244.6 596.1,217.8 596.1,218.3 596.1,229.0 596.1,225.0 596.2,231.8 596.2,241.4 596.2,231.8 596.2,240.5 596.2,227.0 596.2,219.3 596.2,232.0 596.2,226.4 596.2,222.6 596.2,217.9 596.2,218.0 596.2,225.9 596.3,231.8 596.3,236.2 596.3,221.6 596.3,234.4 596.3,218.9 596.3,217.4 596.3,241.0 596.3,222.4 596.3,231.6 596.3,224.1 596.3,232.7 596.3,219.9 596.4,242.1 596.4,225.9 596.4,226.0 596.4,221.5 596.4,221.1 596.4,223.3 596.4,244.5 596.4,245.6 596.4,222.9 596.4,217.4 596.4,231.7 596.4,227.0 596.4,228.8 596.5,241.4 596.5,236.0 596.5,245.6 596.5,231.3 596.5,230.2 596.5,224.0 596.5,218.6 596.5,217.9 596.5,222.6 596.5,231.7 596.5,228.1 596.5,229.4 596.6,234.5 596.6,224.1 596.6,225.7 596.6,222.4 596.6,229.8 596.6,238.2 596.6,228.4 596.6,229.4 596.6,238.2 596.6,231.0 596.6,222.8 596.6,229.3 596.7,232.2 596.7,224.5 596.7,241.1 596.7,225.7 596.7,218.5 596.7,227.5 596.7,239.1 596.7,225.0 596.7,234.0 596.7,233.0 596.7,227.5 596.7,221.8 596.7,222.8 596.8,232.6 596.8,233.8 596.8,226.0 596.8,222.6 596.8,221.5 596.8,228.7 596.8,234.5 596.8,227.5 596.8,222.9 596.8,231.7 596.8,245.6 596.8,245.6 596.9,229.8 596.9,223.9 596.9,220.6 596.9,221.7 596.9,222.1 596.9,239.4 596.9,231.9 596.9,232.9 596.9,227.3 596.9,225.7 596.9,236.1 596.9,242.7 596.9,232.7 597.0,228.9 597.0,229.5 597.0,228.5 597.0,240.3 597.0,227.9 597.0,226.0 597.0,235.6 597.0,233.1 597.0,244.3 597.0,225.5 597.0,220.6 597.0,238.0 597.1,226.7 597.1,229.6 597.1,245.6 597.1,232.6 597.1,236.3 597.1,226.4 597.1,220.1 597.1,220.4 597.1,227.4 597.1,222.2 597.1,238.2 597.1,217.7 597.1,220.6 597.2,224.5 597.2,229.3 597.2,233.2 597.2,224.8 597.2,218.9 597.2,224.4 597.2,220.1 597.2,228.1 597.2,233.1 597.2,232.2 597.2,224.5 597.2,236.0 597.3,233.4 597.3,231.9 597.3,222.4 597.3,227.6 597.3,233.7 597.3,232.5 597.3,228.0 597.3,238.5 597.3,233.3 597.3,229.9 597.3,223.9 597.3,221.6 597.3,227.5 597.4,221.3 597.4,245.6 597.4,245.6 597.4,230.6 597.4,228.3 597.4,239.3 597.4,225.5 597.4,232.3 597.4,221.6 597.4,222.6 597.4,230.8 597.4,220.7 597.4,226.6 597.5,229.9 597.5,234.3 597.5,221.5 597.5,218.2 597.5,230.4 597.5,223.5 597.5,223.4 597.5,241.2 597.5,226.3 597.5,222.3 597.5,241.4 597.5,226.3 597.6,227.6 597.6,215.3 597.6,222.4 597.6,232.0 597.6,232.6 597.6,241.3 597.6,236.2 597.6,219.9 597.6,221.1 597.6,225.6 597.6,226.9 597.6,237.1 597.6,245.6 597.7,232.3 597.7,232.6 597.7,223.7 597.7,224.5 597.7,221.4 597.7,222.5 597.7,231.7 597.7,243.5 597.7,226.0 597.7,222.9 597.7,218.0 597.7,223.9 597.7,227.0 597.8,234.6 597.8,225.3 597.8,219.9 597.8,221.2 597.8,221.5 597.8,228.6 597.8,235.3 597.8,231.7 597.8,225.7 597.8,224.5 597.8,227.1 597.8,221.0 597.9,219.8 597.9,233.7 597.9,228.3 597.9,238.6 597.9,219.9 597.9,215.8 597.9,220.4 597.9,229.6 597.9,224.3 597.9,226.0 597.9,245.6 597.9,231.7 597.9,221.0 598.0,215.5 598.0,216.5 598.0,228.7 598.0,230.6 598.0,225.1 598.0,224.7 598.0,224.9 598.0,245.6 598.0,238.5 598.0,224.1 598.0,217.8 598.0,227.8 598.0,226.3 598.1,230.3 598.1,229.9 598.1,237.4 598.1,222.0 598.1,217.8 598.1,219.4 598.1,219.3 598.1,223.6 598.1,224.9 598.1,221.8 598.1,224.9 598.1,240.3 598.1,222.5 598.2,219.8 598.2,225.9 598.2,226.6 598.2,219.7 598.2,222.4 598.2,220.8 598.2,224.0 598.2,226.3 598.2,216.5 598.2,218.1 598.2,217.0 598.2,223.7 598.2,235.1 598.3,235.9 598.3,219.8 598.3,222.4 598.3,225.0 598.3,222.2 598.3,245.6 598.3,232.4 598.3,226.2 598.3,229.7 598.3,228.7 598.3,234.4 598.3,230.6 598.3,220.6 598.4,219.7 598.4,216.7 598.4,215.7 598.4,215.5 598.4,220.2 598.4,222.8 598.4,223.1 598.4,227.1 598.4,226.5 598.4,224.2 598.4,228.4 598.4,223.5 598.4,225.9 598.5,235.4 598.5,228.5 598.5,218.1 598.5,217.2 598.5,222.1 598.5,227.9 598.5,230.6 598.5,223.1 598.5,225.0 598.5,226.4 598.5,225.7 598.5,231.9 598.5,228.3 598.6,232.8 598.6,231.9 598.6,219.2 598.6,222.9 598.6,235.2 598.6,224.8 598.6,225.0 598.6,233.3 598.6,233.2 598.6,232.2 598.6,235.9 598.6,235.3 598.6,230.2 598.7,224.2 598.7,222.2 598.7,222.7 598.7,229.8 598.7,241.3 598.7,233.1 598.7,227.8 598.7,231.1 598.7,215.8 598.7,215.7 598.7,216.9 598.7,222.5 598.7,233.0 598.8,226.0 598.8,222.8 598.8,237.9 598.8,233.3 598.8,244.9 598.8,226.8 598.8,218.7 598.8,223.4 598.8,227.3 598.8,228.2 598.8,231.9 598.8,224.7 598.8,219.6 598.9,223.9 598.9,227.4 598.9,224.3 598.9,221.5 598.9,235.1 598.9,240.9 598.9,223.6 598.9,215.6 598.9,216.4 598.9,225.0 598.9,236.3 598.9,231.6 598.9,223.1 599.0,215.5 599.0,229.0 599.0,230.6 599.0,218.7 599.0,215.5 599.0,221.6 599.0,245.6 599.0,220.0 599.0,215.7 599.0,217.4 599.0,220.8 599.0,218.5 599.0,215.5 599.1,221.3 599.1,229.1 599.1,242.8 599.1,222.1 599.1,223.4 599.1,228.9 599.1,234.2 599.1,244.0 599.1,224.1 599.1,240.9 599.1,222.0 599.1,239.2 599.1,227.7 599.1,238.6 599.2,232.2 599.2,245.6 599.2,232.5 599.2,224.4 599.2,221.1 599.2,222.1 599.2,224.1 599.2,224.8 599.2,226.4 599.2,238.0 599.2,227.0 599.2,228.2 599.2,234.9 599.3,226.5 599.3,227.0 599.3,232.3 599.3,231.9 599.3,245.6 599.3,231.2 599.3,217.6 599.3,219.9 599.3,233.0 599.3,227.3 599.3,235.2 599.3,236.4 599.3,222.3 599.4,219.7 599.4,229.9 599.4,233.6 599.4,235.5 599.4,225.4 599.4,224.1 599.4,231.8 599.4,217.1 599.4,215.5 599.4,221.8 599.4,232.6 599.4,218.6 599.4,226.4 599.5,223.4 599.5,227.5 599.5,220.6 599.5,216.2 599.5,217.8 599.5,228.7 599.5,237.1 599.5,225.5 599.5,244.0 599.5,219.9 599.5,224.4 599.5,231.1 599.5,231.0 599.5,240.4 599.6,225.7 599.6,217.4 599.6,226.1 599.6,227.7 599.6,219.1 599.6,235.1 599.6,224.7 599.6,215.8 599.6,223.4 599.6,224.0 599.6,224.5 599.6,229.9 599.6,236.1 599.7,220.9 599.7,226.2 599.7,231.4 599.7,240.7 599.7,226.0 599.7,222.8 599.7,230.2 599.7,222.2 599.7,228.4 599.7,245.6 599.7,236.9 599.7,223.1 599.7,222.9 599.7,226.7 599.8,226.8 599.8,242.4 599.8,226.0 599.8,223.0 599.8,220.1 599.8,231.8 599.8,227.9 599.8,218.6 599.8,226.8 599.8,238.2 599.8,222.9 599.8,217.9 599.8,222.7 599.9,240.1 599.9,242.8 599.9,225.9 599.9,223.9 599.9,232.5 599.9,234.2 599.9,225.8 599.9,228.8 599.9,239.0 599.9,245.6 599.9,227.7 599.9,227.4 599.9,219.3 599.9,230.9 600.0,225.9 600.0,231.2 600.0,228.1 600.0,219.4 600.0,221.3 600.0,225.3 600.0,245.6 600.0,245.6 600.0,226.4 600.0,220.1 600.0,235.5 600.0,223.2 600.0,219.8 600.1,222.3 600.1,222.5 600.1,228.8 600.1,228.9 600.1,220.9 600.1,221.6 600.1,220.7 600.1,228.4 600.1,239.8 600.1,224.5 600.1,217.9 600.1,214.6 600.1,216.2 600.1,218.7 600.2,215.5 600.2,215.0 600.2,215.5 600.2,222.9 600.2,233.5 600.2,226.4 600.2,218.7 600.2,219.1 600.2,226.1 600.2,230.1 600.2,221.9 600.2,222.0 600.2,229.0 600.3,234.8 600.3,226.7 600.3,240.9 600.3,223.5 600.3,225.8 600.3,218.2 600.3,220.1 600.3,235.1 600.3,233.2 600.3,230.3 600.3,229.1 600.3,245.6 600.3,225.0 600.3,219.4 600.4,227.2 600.4,222.7 600.4,221.8 600.4,225.3 600.4,236.7 600.4,238.3 600.4,242.5 600.4,235.2 600.4,225.1 600.4,219.4 600.4,221.2 600.4,224.6 600.4,221.8 600.5,220.0 600.5,219.5 600.5,215.4 600.5,215.9 600.5,227.4 600.5,239.4 600.5,245.6 600.5,245.6 600.5,232.5 600.5,231.5 600.5,231.1 600.5,237.6 600.5,218.4 600.5,215.7 600.6,215.5 600.6,215.2 600.6,216.9 600.6,218.6 600.6,219.6 600.6,222.2 600.6,221.0 600.6,221.2 600.6,221.4 600.6,227.4 600.6,224.6 600.6,223.5 600.6,232.1 600.6,218.8 600.7,224.2 600.7,229.9 600.7,223.8 600.7,222.3 600.7,215.5 600.7,225.1 600.7,225.0 600.7,222.4 600.7,224.4 600.7,225.8 600.7,232.9 600.7,228.1 600.7,236.5 600.7,224.6 600.8,225.2 600.8,229.3 600.8,235.0 600.8,227.9 600.8,240.2 600.8,225.1 600.8,220.5 600.8,217.2 600.8,222.3 600.8,229.7 600.8,221.2 600.8,215.1 600.8,217.7 600.8,227.7 600.9,232.0 600.9,227.3 600.9,233.8 600.9,222.4 600.9,223.5 600.9,221.6 600.9,218.7 600.9,221.4 600.9,225.9 600.9,229.6 600.9,218.3 600.9,224.2 600.9,245.6 601.0,225.9 601.0,218.8 601.0,230.8 601.0,228.8 601.0,231.9 601.0,230.3 601.0,233.3 601.0,231.0 601.0,220.4 601.0,221.2 601.0,220.2 601.0,217.6 601.0,225.9 601.0,234.9 601.1,228.9 601.1,245.6 601.1,237.3 601.1,241.7 601.1,232.3 601.1,228.1 601.1,219.9 601.1,219.2 601.1,218.8 601.1,219.6 601.1,222.5 601.1,221.6 601.1,240.0 601.1,222.4 601.2,229.1 601.2,236.9 601.2,234.3 601.2,229.0 601.2,230.6 601.2,221.2 601.2,227.5 601.2,222.3 601.2,220.5 601.2,227.8 601.2,232.8 601.2,223.2 601.2,217.2 601.2,230.9 601.3,224.2 601.3,227.2 601.3,245.6 601.3,224.1 601.3,218.4 601.3,217.4 601.3,245.6 601.3,219.9 601.3,222.6 601.3,222.3 601.3,222.1 601.3,227.4 601.3,227.9 601.3,218.7 601.4,221.4 601.4,230.1 601.4,223.7 601.4,245.6 601.4,230.9 601.4,238.1 601.4,237.7 601.4,234.8 601.4,221.4 601.4,218.9 601.4,216.5 601.4,215.6 601.4,229.4 601.4,230.6 601.5,225.1 601.5,220.4 601.5,230.3 601.5,217.2 601.5,219.4 601.5,219.2 601.5,222.6 601.5,227.1 601.5,224.6 601.5,222.5 601.5,226.1 601.5,222.4 601.5,217.1 601.5,215.4 601.6,220.9 601.6,225.5 601.6,225.6 601.6,231.7 601.6,241.8 601.6,234.2 601.6,218.4 601.6,223.9 601.6,223.2 601.6,219.2 601.6,228.2 601.6,232.4 601.6,226.3 601.6,228.0 601.7,226.6 601.7,230.1 601.7,229.4 601.7,222.9 601.7,232.0 601.7,231.8 601.7,232.4 601.7,219.1 601.7,222.0 601.7,221.5 601.7,227.1 601.7,225.0 601.7,219.9 601.7,218.5 601.8,223.1 601.8,225.2 601.8,230.5 601.8,219.9 601.8,219.9 601.8,220.5 601.8,233.6 601.8,239.9 601.8,223.4 601.8,221.1 601.8,214.4 601.8,216.1 601.8,230.8 601.8,237.0 601.8,228.1 601.9,215.5 601.9,219.4 601.9,225.9 601.9,221.6 601.9,231.3 601.9,233.7 601.9,219.9 601.9,221.2 601.9,216.3 601.9,226.9 601.9,227.0 601.9,218.1 601.9,220.9 601.9,237.1 602.0,230.4 602.0,231.8 602.0,224.7 602.0,225.6 602.0,226.3 602.0,227.6 602.0,224.0 602.0,220.8 602.0,218.9 602.0,222.2 602.0,238.8 602.0,226.7 602.0,221.7 602.0,220.3 602.1,220.0 602.1,226.2 602.1,245.6 602.1,245.6 602.1,228.9 602.1,245.6 602.1,221.2 602.1,221.7 602.1,222.3 602.1,220.5 602.1,218.4 602.1,214.1 602.1,215.3 602.1,228.7 602.2,215.0 602.2,217.6 602.2,221.5 602.2,217.8 602.2,225.9 602.2,227.9 602.2,224.9 602.2,226.2 602.2,234.6 602.2,219.2 602.2,218.0 602.2,239.8 602.2,227.8 602.2,232.0 602.2,228.5 602.3,228.0 602.3,223.7 602.3,219.1 602.3,217.2 602.3,216.0 602.3,221.8 602.3,226.8 602.3,228.3 602.3,216.1 602.3,215.4 602.3,218.6 602.3,218.1 602.3,215.1 602.3,216.7 602.4,232.2 602.4,237.3 602.4,221.3 602.4,223.6 602.4,227.5 602.4,222.5 602.4,225.2 602.4,237.6 602.4,231.0 602.4,223.8 602.4,230.3 602.4,232.3 602.4,229.2 602.4,220.8 602.5,214.9 602.5,217.4 602.5,231.5 602.5,224.6 602.5,215.6 602.5,214.8 602.5,218.8 602.5,241.2 602.5,223.2 602.5,227.7 602.5,232.0 602.5,241.1 602.5,227.7 602.5,229.4 602.5,233.4 602.6,237.7 602.6,227.3 602.6,224.2 602.6,227.5 602.6,245.6 602.6,235.2 602.6,220.6 602.6,220.2 602.6,234.3 602.6,230.7 602.6,245.6 602.6,227.0 602.6,233.5 602.6,232.7 602.7,226.6 602.7,225.7 602.7,231.2 602.7,231.7 602.7,230.0 602.7,223.1 602.7,221.0 602.7,228.0 602.7,234.6 602.7,229.4 602.7,228.1 602.7,241.4 602.7,228.9 602.7,224.1 602.7,223.3 602.8,223.1 602.8,236.9 602.8,244.8 602.8,245.6 602.8,225.8 602.8,220.4 602.8,227.5 602.8,244.1 602.8,225.5 602.8,245.6 602.8,227.4 602.8,221.9 602.8,218.1 602.8,223.8 602.9,218.5 602.9,221.5 602.9,229.4 602.9,225.6 602.9,232.1 602.9,224.4 602.9,218.6 602.9,217.9 602.9,220.1 602.9,226.6 602.9,230.4 602.9,241.5 602.9,233.6 602.9,227.9 602.9,225.7 603.0,220.0 603.0,217.4 603.0,215.1 603.0,215.6 603.0,222.7 603.0,223.4 603.0,223.8 603.0,229.7 603.0,231.4 603.0,229.5 603.0,236.7 603.0,238.0 603.0,231.8 603.0,233.4 603.1,224.6 603.1,227.0 603.1,216.6 603.1,221.4 603.1,236.5 603.1,237.8 603.1,241.8 603.1,236.6 603.1,245.6 603.1,235.1 603.1,228.3 603.1,234.8 603.1,239.5 603.1,230.9 603.1,226.4 603.2,229.8 603.2,221.6 603.2,218.7 603.2,224.8 603.2,224.1 603.2,224.3 603.2,224.2 603.2,229.4 603.2,222.8 603.2,223.9 603.2,227.7 603.2,221.1 603.2,219.0 603.2,229.1 603.2,237.8 603.3,227.4 603.3,228.7 603.3,229.5 603.3,224.9 603.3,217.6 603.3,215.4 603.3,219.1" fill="none" stroke="#5068a6" stroke-width="0.55" stroke-linejoin="bevel"/>
<line x1="487.03" y1="35.7" x2="487.03" y2="216.23" stroke="#5068a6" stroke-width="1.15"/>
<line x1="487.03" y1="193.36" x2="487.03" y2="202.99" stroke="#5068a6" stroke-width="3.0"/>
<line x1="513.93" y1="189.75" x2="513.93" y2="228.26" stroke="#5068a6" stroke-width="1.1"/>
<line x1="529.67" y1="198.65" x2="529.67" y2="228.26" stroke="#5068a6" stroke-width="1.1"/>
<line x1="540.84" y1="204.67" x2="540.84" y2="228.26" stroke="#5068a6" stroke-width="1.0"/>
<line x1="549.5" y1="209.97" x2="549.5" y2="228.26" stroke="#5068a6" stroke-width="1.0"/></g><g font-size="6.3" fill="#2a2a2a"><text x="20.5" y="33.71" text-anchor="end">14</text>
<text x="20.5" y="48.51" text-anchor="end">12</text>
<text x="20.5" y="63.32" text-anchor="end">10</text>
<text x="20.5" y="78.13" text-anchor="end">8</text>
<text x="20.5" y="92.93" text-anchor="end">6</text>
<text x="20.5" y="107.74" text-anchor="end">4</text>
<text x="20.5" y="122.54" text-anchor="end">2</text>
<text x="20.5" y="137.35" text-anchor="end">0</text>
<text x="20.5" y="152.16" text-anchor="end">-2</text>
<text x="20.5" y="166.96" text-anchor="end">-4</text>
<text x="20.5" y="181.77" text-anchor="end">-6</text>
<text x="20.5" y="196.57" text-anchor="end">-8</text>
<text x="20.5" y="211.38" text-anchor="end">-10</text>
<text x="20.5" y="226.19" text-anchor="end">-12</text>
<text x="20.5" y="240.99" text-anchor="end">-14</text>
<text x="22.6" y="254" text-anchor="middle">0</text>
<text x="59.4" y="254" text-anchor="middle">400u</text>
<text x="96.2" y="254" text-anchor="middle">800u</text>
<text x="133" y="254" text-anchor="middle">1.2m</text>
<text x="169.8" y="254" text-anchor="middle">1.6m</text>
<text x="206.6" y="254" text-anchor="middle">2.0m</text>
<text x="243.4" y="254" text-anchor="middle">2.4m</text>
<text x="280.2" y="254" text-anchor="middle">2.8m</text><text x="332" y="25.97" text-anchor="end">+10</text>
<text x="332" y="38" text-anchor="end">0</text>
<text x="332" y="50.03" text-anchor="end">-10</text>
<text x="332" y="62.07" text-anchor="end">-20</text>
<text x="332" y="74.11" text-anchor="end">-30</text>
<text x="332" y="86.14" text-anchor="end">-40</text>
<text x="332" y="98.17" text-anchor="end">-50</text>
<text x="332" y="110.21" text-anchor="end">-60</text>
<text x="332" y="122.25" text-anchor="end">-70</text>
<text x="332" y="134.28" text-anchor="end">-80</text>
<text x="332" y="146.31" text-anchor="end">-90</text>
<text x="332" y="158.35" text-anchor="end">-100</text>
<text x="332" y="170.38" text-anchor="end">-110</text>
<text x="332" y="182.42" text-anchor="end">-120</text>
<text x="332" y="194.46" text-anchor="end">-130</text>
<text x="332" y="206.49" text-anchor="end">-140</text>
<text x="332" y="218.53" text-anchor="end">-150</text>
<text x="332" y="230.56" text-anchor="end">-160</text>
<text x="332" y="242.6" text-anchor="end">-170</text>
<text x="335.2" y="254" text-anchor="middle">20</text>
<text x="350.94" y="254" text-anchor="middle">30</text>
<text x="370.76" y="254" text-anchor="middle">50</text>
<text x="397.66" y="254" text-anchor="middle">100</text>
<text x="424.57" y="254" text-anchor="middle">200</text>
<text x="440.3" y="254" text-anchor="middle">300</text>
<text x="460.13" y="254" text-anchor="middle">500</text>
<text x="487.03" y="254" text-anchor="middle">1k</text>
<text x="513.93" y="254" text-anchor="middle">2k</text>
<text x="529.67" y="254" text-anchor="middle">3k</text>
<text x="549.5" y="254" text-anchor="middle">5k</text>
<text x="576.4" y="254" text-anchor="middle">10k</text>
<text x="603.3" y="254" text-anchor="middle">20k</text></g><text x="157.8" y="22" font-size="5.8" text-anchor="middle" fill="#222" style="font-family:'Liberation Serif',serif">Scope</text><text x="468.5" y="22" font-size="5.8" text-anchor="middle" fill="#222" style="font-family:'Liberation Serif',serif">FFT</text><text x="158" y="260.4" font-size="6.0" text-anchor="middle" fill="#2a2a2a">Time (s)</text><text x="469.2" y="260.4" font-size="6.0" text-anchor="middle" fill="#2a2a2a">Frequency (Hz)</text><text transform="translate(8.8 134.9) rotate(-90)" font-size="6.1" text-anchor="middle" fill="#2a2a2a">Instantaneous Level (V)</text><text transform="translate(318.6 134.5) rotate(-90)" font-size="6.3" text-anchor="middle" fill="#2a2a2a">Level (dBrA)</text></svg>
<div class="a" style="left:0px;top:263px;width:620px;height:2px;background:#a3a7a7;"></div>
<div class="a" style="left:0px;top:265px;width:620px;height:3px;background:#41707a;"></div>
<div class="a" style="left:305.4px;top:265.8px;width:1.4px;height:1.4px;background:#b4d4e0;border-radius:50%"></div>
<div class="a" style="left:308.45px;top:265.8px;width:1.4px;height:1.4px;background:#b4d4e0;border-radius:50%"></div>
<div class="a" style="left:311.5px;top:265.8px;width:1.4px;height:1.4px;background:#b4d4e0;border-radius:50%"></div>
<div class="a" style="left:0px;top:268px;width:620px;height:12px;background:#d9d9db;"></div>
<div class="a" style="left:0px;top:280px;width:620px;height:2px;background:#afb1b3;"></div>
<div class="a" style="left:1.4px;top:270.8px;width:8px;height:7.6px;background:#27404e;"></div>
<div class="a" style="left:5px;top:271.8px;width:1px;height:5.6px;background:#ffffff;"></div>
<div class="a" style="left:2.4px;top:274.3px;width:6px;height:1px;background:#ffffff;"></div>
<div class="t" style="left:11px;top:271.0px;font-size:7.2px;color:#2a2a2a">Add Meter</div>
<div class="arr" style="left:47.2px;top:273.6px"></div>
<svg class="a" style="left:55.3px;top:270px" width="8.6" height="8.6" viewBox="0 0 8.6 8.6"><rect x="0.5" y="0.5" width="7.6" height="7.6" fill="#dfe6e6" stroke="#2a3c44" stroke-width="1"/><rect x="4.6" y="0.5" width="3.5" height="7.6" fill="#1e3a44"/><rect x="1.3" y="1.8" width="3" height="1" fill="#fff"/><path d="M2.6 4.3 L5 2.9 V3.8 H8 V4.8 H5 V5.7 Z" fill="#fff"/></svg>
<div class="t" style="left:65.2px;top:271.0px;font-size:7.2px;color:#2a2a2a">Save Meter Data</div>
<div class="a" style="left:122.7px;top:270.8px;width:8.3px;height:7.6px;background:#27404e;"></div>
<div class="a" style="left:125.4px;top:272.4px;width:0;height:0;border-top:2.3px solid transparent;border-bottom:2.3px solid transparent;border-left:3.6px solid #fff"></div>
<div class="t" style="left:132.3px;top:271.0px;font-size:7.2px;color:#2a2a2a">Regulate</div>
<div class="a" style="left:608.2px;top:275.8px;width:6.4px;height:1.1px;background:#2c3e60;"></div>
<div class="a" style="left:610.1px;top:271.6px;width:2.8px;height:2.8px;border-radius:50%;background:#1e2c40"></div>
<div class="a" style="left:617.2px;top:263px;width:1px;height:196px;background:#a8acac;"></div>
<div class="a" style="left:618.2px;top:263px;width:1.8px;height:196px;background:#46565c;"></div>
<div class="a" style="left:0px;top:282px;width:617.2px;height:164px;background:#b4b8b8;"></div>
<div class="a" style="left:0px;top:281.6px;width:1.5px;height:165px;background:#7c8486;"></div>
<div class="a" style="left:603.8px;top:281.6px;width:5.8px;height:165px;background:#b9bbbb;"></div>
<div class="a" style="left:609.6px;top:281.6px;width:7.6px;height:165px;background:#f0f0f0;"></div>
<div class="a" style="left:610.4px;top:290.5px;width:6.0px;height:109px;background:#cfcfcf;"></div>
<svg class="a" style="left:611px;top:283px" width="6" height="5" viewBox="0 0 6 5"><path d="M0.6 3.8 L3 1.2 L5.4 3.8" fill="none" stroke="#333" stroke-width="0.9"/></svg>
<svg class="a" style="left:611.5px;top:439.5px" width="6" height="5" viewBox="0 0 6 5"><path d="M0.6 1.2 L3 3.8 L5.4 1.2" fill="none" stroke="#333" stroke-width="0.9"/></svg>
<div class="a" style="left:1.5px;top:282.5px;width:299.6px;height:12.8px;background:#e4eaec;"></div>
<div class="t" style="left:3.9px;top:285.7px;font-size:8.2px;font-weight:bold;color:#141414;-webkit-text-stroke:0.2px #141414">RMS Level</div>
<div class="a" style="left:47.1px;top:282.5px;width:38.1px;height:12.8px;background:#ffffff;"></div>
<div class="t" style="left:49.7px;top:286.9px;font-size:6.3px;color:#555">W</div>
<div class="arr" style="left:81.0px;top:287.9px"></div>
<div class="mic" style="left:87.1px;top:284.6px"><i></i></div>
<div class="arr" style="left:97.1px;top:288.1px"></div>
<svg class="ic" style="left:102.6px;top:284.5px" width="8.5" height="8.5" viewBox="0 0 8.5 8.5"><rect width="8.5" height="8.5" rx="0.8" fill="#2c4654"/><circle cx="4.25" cy="4.25" r="1.85" fill="none" stroke="#fff" stroke-width="1.9"/></svg>
<svg class="ic" style="left:279.9px;top:285.5px" width="7" height="7" viewBox="0 0 7 7"><path d="M2.6 0.75 H0.75 V6.25 H6.25 V4.4" fill="none" stroke="#2a4878" stroke-width="1.3"/><path d="M2.4 4.6 L5.2 1.8" stroke="#2a4878" stroke-width="1.2"/><path d="M3.6 0 H7 V3.4 Z" fill="#2a4878"/></svg>
<svg class="ic" style="left:292.1px;top:285.9px" width="6" height="6" viewBox="0 0 6 6"><path d="M0.5 0.5 L5.5 5.5 M5.5 0.5 L0.5 5.5" stroke="#1e2a38" stroke-width="1.15"/></svg>
<div class="a" style="left:1.5px;top:295.3px;width:299.6px;height:67.3px;background:#dce4e6;"></div>
<div class="t" style="left:5.4px;top:322.9px;font-size:17.2px;color:#2a2a2a;letter-spacing:-0.4px;transform:scaleX(0.9);transform-origin:0 0">Ch1</div>
<div class="a" style="left:71.9px;top:327.1px;width:0;height:0;border-left:3.1px solid transparent;border-right:3.1px solid transparent;border-top:6px solid #111"></div>
<div class="a" style="left:78.3px;top:297.6px;width:218.4px;height:54.6px;background:#000000;"></div>
<div class="t" style="left:212.1px;top:317.7px;font-size:17.2px;color:#34dc34;-webkit-text-stroke:0.3px #34dc34;transform:scaleX(0.875);transform-origin:0 0">5.038</div>
<div class="t" style="left:279px;top:317.7px;font-size:17.2px;color:#34dc34;-webkit-text-stroke:0.3px #34dc34;transform:scaleX(0.875);transform-origin:0 0">W</div>
<div class="a" style="left:78.3px;top:352.2px;width:218.4px;height:10.1px;background:#a2a2a2;"></div>
<div class="a" style="left:78.3px;top:352.2px;width:218.4px;height:1px;background:#bcbcbc;"></div>
<div class="a" style="left:78.3px;top:352.8px;width:169.89999999999998px;height:9.0px;background:#22e622;"></div>
<div class="a" style="left:78.3px;top:355.7px;width:174.10000000000002px;height:2.1px;background:#0c0c0c;border-radius:0 1px 1px 0"></div>
<div class="a" style="left:304.1px;top:282.5px;width:299.7px;height:12.8px;background:#e4eaec;"></div>
<div class="t" style="left:306.5px;top:285.7px;font-size:8.2px;font-weight:bold;color:#141414;-webkit-text-stroke:0.2px #141414">THD+N Ratio</div>
<div class="a" style="left:362px;top:282.5px;width:37.30000000000001px;height:12.8px;background:#ffffff;"></div>
<div class="t" style="left:364.6px;top:286.9px;font-size:6.3px;color:#555">%</div>
<div class="arr" style="left:395.1px;top:287.9px"></div>
<div class="mic" style="left:401px;top:284.6px"><i></i></div>
<div class="arr" style="left:411px;top:288.1px"></div>
<svg class="ic" style="left:416.5px;top:284.5px" width="8.5" height="8.5" viewBox="0 0 8.5 8.5"><rect width="8.5" height="8.5" rx="0.8" fill="#2c4654"/><circle cx="4.25" cy="4.25" r="1.85" fill="none" stroke="#fff" stroke-width="1.9"/></svg>
<svg class="ic" style="left:582.5px;top:285.5px" width="7" height="7" viewBox="0 0 7 7"><path d="M2.6 0.75 H0.75 V6.25 H6.25 V4.4" fill="none" stroke="#2a4878" stroke-width="1.3"/><path d="M2.4 4.6 L5.2 1.8" stroke="#2a4878" stroke-width="1.2"/><path d="M3.6 0 H7 V3.4 Z" fill="#2a4878"/></svg>
<svg class="ic" style="left:594.7px;top:285.9px" width="6" height="6" viewBox="0 0 6 6"><path d="M0.5 0.5 L5.5 5.5 M5.5 0.5 L0.5 5.5" stroke="#1e2a38" stroke-width="1.15"/></svg>
<div class="a" style="left:304.1px;top:295.3px;width:299.7px;height:67.3px;background:#dce4e6;"></div>
<div class="t" style="left:308.0px;top:322.9px;font-size:17.2px;color:#2a2a2a;letter-spacing:-0.4px;transform:scaleX(0.9);transform-origin:0 0">Ch1</div>
<div class="a" style="left:374.5px;top:327.1px;width:0;height:0;border-left:3.1px solid transparent;border-right:3.1px solid transparent;border-top:6px solid #111"></div>
<div class="a" style="left:380.90000000000003px;top:297.6px;width:218.4px;height:54.6px;background:#000000;"></div>
<div class="t" style="left:493.4px;top:317.7px;font-size:17.2px;color:#34dc34;-webkit-text-stroke:0.3px #34dc34;transform:scaleX(0.92);transform-origin:0 0">0.000098</div>
<div class="t" style="left:583.6px;top:317.7px;font-size:17.2px;color:#34dc34;-webkit-text-stroke:0.3px #34dc34;transform:scaleX(0.875);transform-origin:0 0">%</div>
<div class="a" style="left:380.90000000000003px;top:352.2px;width:218.4px;height:10.1px;background:#a2a2a2;"></div>
<div class="a" style="left:380.90000000000003px;top:352.2px;width:218.4px;height:1px;background:#bcbcbc;"></div>
<div class="a" style="left:380.90000000000003px;top:355.7px;width:218.40000000000003px;height:2.1px;background:#0c0c0c;border-radius:0 1px 1px 0"></div>
<div class="a" style="left:1.5px;top:366.4px;width:299.6px;height:12.8px;background:#e4eaec;"></div>
<div class="t" style="left:3.9px;top:369.59999999999997px;font-size:8.2px;font-weight:bold;color:#141414;-webkit-text-stroke:0.2px #141414">Frequency</div>
<div class="a" style="left:47.8px;top:366.4px;width:37.10000000000001px;height:12.8px;background:#ffffff;"></div>
<div class="t" style="left:50.4px;top:370.79999999999995px;font-size:6.3px;color:#555">Hz</div>
<div class="arr" style="left:80.7px;top:371.79999999999995px"></div>
<div class="mic" style="left:87.6px;top:368.5px"><i></i></div>
<div class="arr" style="left:97.6px;top:372.0px"></div>
<svg class="ic" style="left:103.1px;top:368.4px" width="8.5" height="8.5" viewBox="0 0 8.5 8.5"><rect width="8.5" height="8.5" rx="0.8" fill="#2c4654"/><circle cx="4.25" cy="4.25" r="1.85" fill="none" stroke="#fff" stroke-width="1.9"/></svg>
<svg class="ic" style="left:279.9px;top:369.4px" width="7" height="7" viewBox="0 0 7 7"><path d="M2.6 0.75 H0.75 V6.25 H6.25 V4.4" fill="none" stroke="#2a4878" stroke-width="1.3"/><path d="M2.4 4.6 L5.2 1.8" stroke="#2a4878" stroke-width="1.2"/><path d="M3.6 0 H7 V3.4 Z" fill="#2a4878"/></svg>
<svg class="ic" style="left:292.1px;top:369.79999999999995px" width="6" height="6" viewBox="0 0 6 6"><path d="M0.5 0.5 L5.5 5.5 M5.5 0.5 L0.5 5.5" stroke="#1e2a38" stroke-width="1.15"/></svg>
<div class="a" style="left:1.5px;top:379.2px;width:299.6px;height:66.80000000000001px;background:#dce4e6;"></div>
<div class="t" style="left:5.4px;top:406.79999999999995px;font-size:17.2px;color:#2a2a2a;letter-spacing:-0.4px;transform:scaleX(0.9);transform-origin:0 0">Ch1</div>
<div class="a" style="left:71.9px;top:411.0px;width:0;height:0;border-left:3.1px solid transparent;border-right:3.1px solid transparent;border-top:6px solid #111"></div>
<div class="a" style="left:78.3px;top:381.5px;width:218.4px;height:54.6px;background:#000000;"></div>
<div class="t" style="left:170.4px;top:401.59999999999997px;font-size:17.2px;color:#34dc34;-webkit-text-stroke:0.3px #34dc34;transform:scaleX(0.875);transform-origin:0 0">1.00012</div>
<div class="t" style="left:268px;top:401.59999999999997px;font-size:17.2px;color:#34dc34;-webkit-text-stroke:0.3px #34dc34;transform:scaleX(0.875);transform-origin:0 0">kHz</div>
<div class="a" style="left:78.3px;top:436.09999999999997px;width:218.4px;height:10.1px;background:#a2a2a2;"></div>
<div class="a" style="left:78.3px;top:436.09999999999997px;width:218.4px;height:1px;background:#bcbcbc;"></div>
<div class="a" style="left:78.3px;top:436.7px;width:124.7px;height:9.0px;background:#22e622;"></div>
<div class="a" style="left:78.3px;top:439.59999999999997px;width:218.39999999999998px;height:2.1px;background:#0c0c0c;border-radius:0 1px 1px 0"></div>
<div class="a" style="left:304.1px;top:366.4px;width:299.7px;height:12.8px;background:#e4eaec;"></div>
<div class="t" style="left:306.5px;top:369.59999999999997px;font-size:8.2px;font-weight:bold;color:#141414;-webkit-text-stroke:0.2px #141414">SINAD</div>
<div class="a" style="left:335.7px;top:366.4px;width:37.69999999999999px;height:12.8px;background:#ffffff;"></div>
<div class="t" style="left:338.3px;top:370.79999999999995px;font-size:6.3px;color:#555">dB</div>
<div class="arr" style="left:369.2px;top:371.79999999999995px"></div>
<div class="mic" style="left:375.2px;top:368.5px"><i></i></div>
<div class="arr" style="left:385.2px;top:372.0px"></div>
<svg class="ic" style="left:390.7px;top:368.4px" width="8.5" height="8.5" viewBox="0 0 8.5 8.5"><rect width="8.5" height="8.5" rx="0.8" fill="#2c4654"/><circle cx="4.25" cy="4.25" r="1.85" fill="none" stroke="#fff" stroke-width="1.9"/></svg>
<svg class="ic" style="left:582.5px;top:369.4px" width="7" height="7" viewBox="0 0 7 7"><path d="M2.6 0.75 H0.75 V6.25 H6.25 V4.4" fill="none" stroke="#2a4878" stroke-width="1.3"/><path d="M2.4 4.6 L5.2 1.8" stroke="#2a4878" stroke-width="1.2"/><path d="M3.6 0 H7 V3.4 Z" fill="#2a4878"/></svg>
<svg class="ic" style="left:594.7px;top:369.79999999999995px" width="6" height="6" viewBox="0 0 6 6"><path d="M0.5 0.5 L5.5 5.5 M5.5 0.5 L0.5 5.5" stroke="#1e2a38" stroke-width="1.15"/></svg>
<div class="a" style="left:304.1px;top:379.2px;width:299.7px;height:66.80000000000001px;background:#dce4e6;"></div>
<div class="t" style="left:308.0px;top:406.79999999999995px;font-size:17.2px;color:#2a2a2a;letter-spacing:-0.4px;transform:scaleX(0.9);transform-origin:0 0">Ch1</div>
<div class="a" style="left:374.5px;top:411.0px;width:0;height:0;border-left:3.1px solid transparent;border-right:3.1px solid transparent;border-top:6px solid #111"></div>
<div class="a" style="left:380.90000000000003px;top:381.5px;width:218.4px;height:54.6px;background:#000000;"></div>
<div class="t" style="left:491.2px;top:401.59999999999997px;font-size:17.2px;color:#34dc34;-webkit-text-stroke:0.3px #34dc34;transform:scaleX(0.875);transform-origin:0 0">120.144</div>
<div class="t" style="left:578px;top:401.59999999999997px;font-size:17.2px;color:#34dc34;-webkit-text-stroke:0.3px #34dc34;transform:scaleX(0.875);transform-origin:0 0">dB</div>
<div class="a" style="left:380.90000000000003px;top:436.09999999999997px;width:218.4px;height:10.1px;background:#a2a2a2;"></div>
<div class="a" style="left:380.90000000000003px;top:436.09999999999997px;width:218.4px;height:1px;background:#bcbcbc;"></div>
<div class="a" style="left:380.90000000000003px;top:436.7px;width:218.40000000000003px;height:9.0px;background:#22e622;"></div>
<div class="a" style="left:380.90000000000003px;top:439.59999999999997px;width:218.40000000000003px;height:2.1px;background:#0c0c0c;border-radius:0 1px 1px 0"></div>
<div class="a" style="left:0px;top:446px;width:617.2px;height:10px;background:#f0f0f0;"></div>
<div class="a" style="left:0px;top:455.8px;width:617.2px;height:1px;background:#fafafa;"></div>
<div class="a" style="left:0px;top:456.8px;width:620px;height:2.2px;background:#1c1c1c;"></div>
<div class="t" style="left:248px;top:449.4px;font-size:6.9px;color:#222">Output:</div>
<div class="a" style="left:273.7px;top:447px;width:96.40000000000003px;height:9.7px;background:#000;border:0.8px solid #3a3a3a"></div><div class="t" style="left:276px;top:449.3px;font-size:6.6px;color:#3ad03a;-webkit-text-stroke:0.15px #3ad03a">Analog Balanced 1 Ch, 40 ohm</div>
<div class="t" style="left:373.4px;top:449.4px;font-size:6.9px;color:#222">Input:</div>
<div class="a" style="left:393.4px;top:447px;width:103.40000000000003px;height:9.7px;background:#000;border:0.8px solid #3a3a3a"></div><div class="t" style="left:395.6px;top:449.3px;font-size:6.6px;color:#3ad03a;-webkit-text-stroke:0.15px #3ad03a">Analog Balanced 1 Ch, 200 kohm</div>
<div class="a" style="left:497.3px;top:447px;width:38.19999999999999px;height:9.7px;background:#000;border:0.8px solid #3a3a3a"></div><div class="t" style="left:499.4px;top:449.3px;font-size:6.6px;color:#3ad03a;-webkit-text-stroke:0.15px #3ad03a">10.00 Vrms</div>
<div class="a" style="left:536.7px;top:447px;width:72.79999999999995px;height:9.7px;background:#000;border:0.8px solid #3a3a3a"></div><div class="t" style="left:538.8px;top:449.3px;font-size:6.6px;color:#3ad03a;-webkit-text-stroke:0.15px #3ad03a">AC (&lt;10 Hz) - 22.4 kHz</div>
</body></html>
